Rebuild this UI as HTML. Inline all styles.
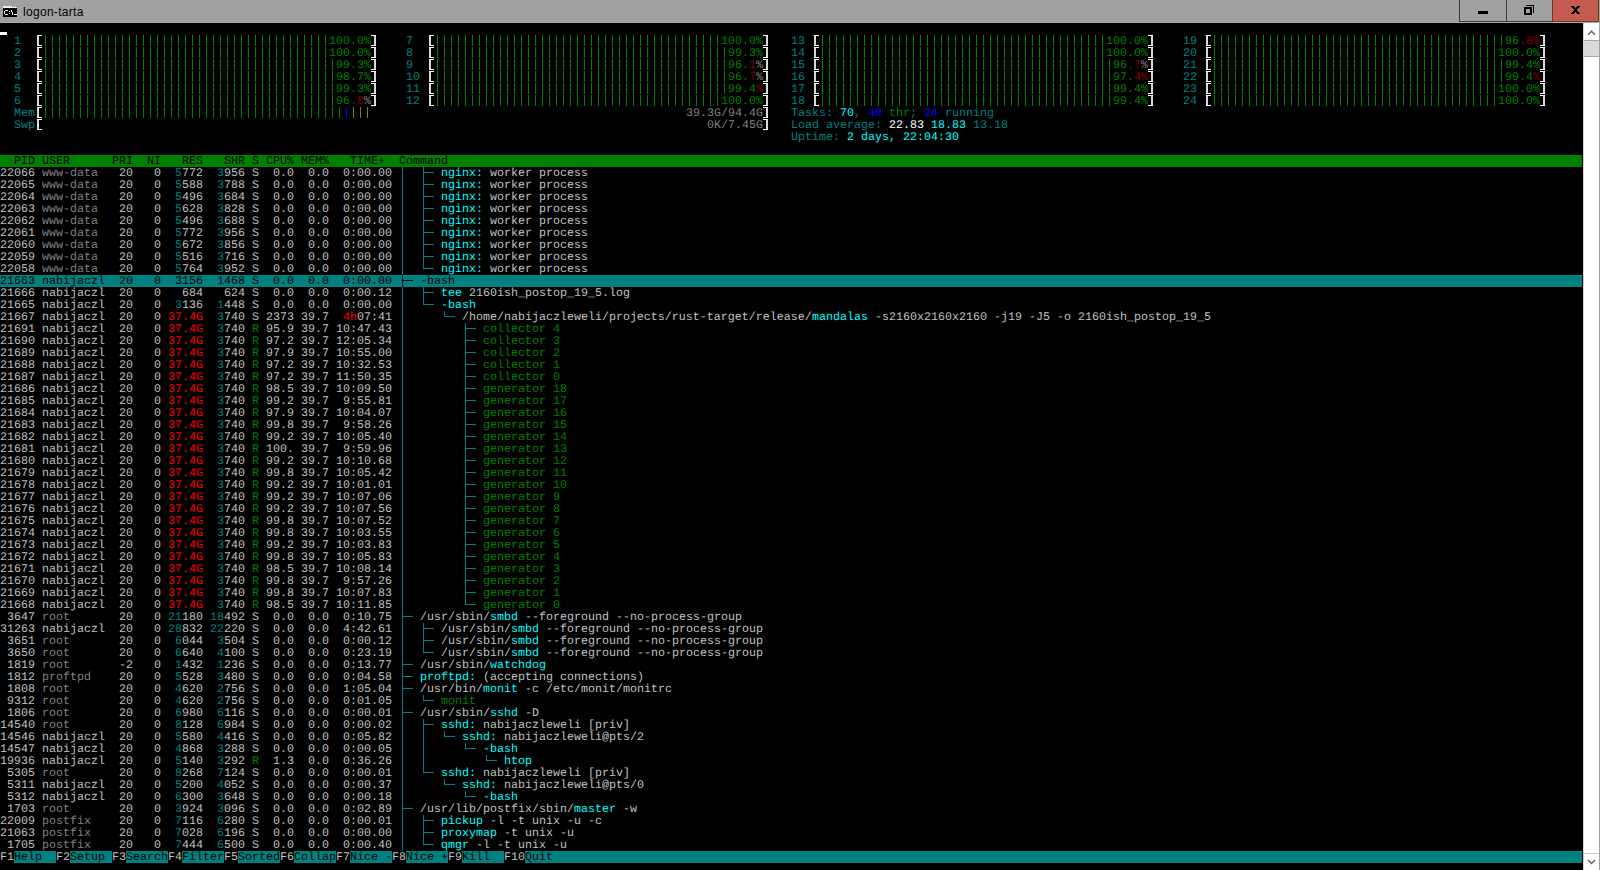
<!DOCTYPE html>
<html><head><meta charset="utf-8"><title>logon-tarta</title>
<style>
html,body{margin:0;padding:0;background:#000;width:1600px;height:870px;overflow:hidden;position:relative}
#tb{position:absolute;left:0;top:0;width:1600px;height:23px;background:#a0a0a0}
#tbl{position:absolute;left:0;top:22px;width:1600px;height:1px;background:#ababab}
#con{position:absolute;left:0;top:0;width:1583px;height:870px;overflow:hidden}
#con i{position:absolute;display:block}
#con b{position:absolute;font-weight:normal;white-space:pre;font-family:"Liberation Mono",monospace;font-size:11.667px;line-height:12px;height:12px;text-rendering:geometricPrecision}
#ttl{position:absolute;left:23px;top:4px;font-family:"Liberation Sans",sans-serif;font-size:12px;line-height:16px;color:#000;letter-spacing:0.3px}
.btn{position:absolute;top:0;height:22px;box-sizing:border-box;border:1px solid #3a3a3a;border-top:none}
#sb{position:absolute;left:1583px;top:23px;width:17px;height:847px;background:#fff}
</style></head><body>
<div id="tb"></div><div id="tbl"></div>
<svg style="position:absolute;left:3px;top:6px" width="15" height="12" shape-rendering="crispEdges">
 <rect x="0" y="0" width="14" height="11" fill="#9da3ad"/>
 <rect x="0" y="0" width="14" height="2" fill="#e6eaf2"/>
 <rect x="9" y="0" width="1" height="1" fill="#5a7ab0"/><rect x="11" y="0" width="1" height="1" fill="#5a7ab0"/><rect x="13" y="0" width="1" height="1" fill="#5a7ab0"/>
 <rect x="0" y="2" width="14" height="9" fill="#000"/>
 <rect x="2" y="4" width="3" height="1" fill="#fff"/><rect x="1" y="5" width="1" height="3" fill="#fff"/><rect x="2" y="8" width="3" height="1" fill="#fff"/>
 <rect x="6" y="5" width="1" height="1" fill="#fff"/><rect x="6" y="7" width="1" height="1" fill="#fff"/>
 <rect x="8" y="4" width="1" height="2" fill="#fff"/><rect x="9" y="6" width="1" height="3" fill="#fff"/>
 <rect x="11" y="8" width="3" height="1" fill="#fff"/>
</svg>
<div id="ttl">logon-tarta</div>
<div class="btn" style="left:1459px;width:48px;background:#a0a0a0"><div style="position:absolute;left:18px;top:11px;width:10px;height:3px;background:#000"></div></div>
<div class="btn" style="left:1507px;width:45px;background:#a0a0a0;border-left:none;border-right:none">
 <div style="position:absolute;left:17px;top:7px;width:8px;height:8px;border:2px solid #000;box-sizing:border-box"></div>
 <div style="position:absolute;left:19px;top:5px;width:8px;height:8px;border-top:1px solid #000;border-right:1px solid #000;box-sizing:border-box"></div>
</div>
<div class="btn" style="left:1552px;width:47px;background:#c45b4f;border-color:#6e3530">
 <svg style="position:absolute;left:18px;top:6px" width="9" height="8" shape-rendering="crispEdges" fill="#000"><rect x="0" y="0" width="3" height="1"/><rect x="6" y="0" width="3" height="1"/><rect x="1" y="1" width="3" height="1"/><rect x="5" y="1" width="3" height="1"/><rect x="2" y="2" width="5" height="1"/><rect x="3" y="3" width="3" height="1"/><rect x="3" y="4" width="3" height="1"/><rect x="2" y="5" width="5" height="1"/><rect x="1" y="6" width="3" height="1"/><rect x="5" y="6" width="3" height="1"/><rect x="0" y="7" width="3" height="1"/><rect x="6" y="7" width="3" height="1"/></svg>
</div>
<div id="con">
<i style="left:0px;top:32px;width:7px;height:3px;background:#ffffff"></i>
<i style="left:37px;top:35px;width:5px;height:1px;background:#ffffff"></i>
<i style="left:37px;top:45px;width:5px;height:1px;background:#ffffff"></i>
<i style="left:37px;top:36px;width:2px;height:9px;background:#d8d8d8"></i>
<i style="left:371px;top:35px;width:5px;height:1px;background:#ffffff"></i>
<i style="left:371px;top:45px;width:5px;height:1px;background:#ffffff"></i>
<i style="left:374px;top:36px;width:2px;height:9px;background:#d8d8d8"></i>
<i style="left:42px;top:35px;width:287px;height:11px;background:repeating-linear-gradient(90deg,transparent 0 3px,#008000 3px 4px,transparent 4px 7px)"></i>
<i style="left:37px;top:47px;width:5px;height:1px;background:#ffffff"></i>
<i style="left:37px;top:57px;width:5px;height:1px;background:#ffffff"></i>
<i style="left:37px;top:48px;width:2px;height:9px;background:#d8d8d8"></i>
<i style="left:371px;top:47px;width:5px;height:1px;background:#ffffff"></i>
<i style="left:371px;top:57px;width:5px;height:1px;background:#ffffff"></i>
<i style="left:374px;top:48px;width:2px;height:9px;background:#d8d8d8"></i>
<i style="left:42px;top:47px;width:287px;height:11px;background:repeating-linear-gradient(90deg,transparent 0 3px,#008000 3px 4px,transparent 4px 7px)"></i>
<i style="left:37px;top:59px;width:5px;height:1px;background:#ffffff"></i>
<i style="left:37px;top:69px;width:5px;height:1px;background:#ffffff"></i>
<i style="left:37px;top:60px;width:2px;height:9px;background:#d8d8d8"></i>
<i style="left:371px;top:59px;width:5px;height:1px;background:#ffffff"></i>
<i style="left:371px;top:69px;width:5px;height:1px;background:#ffffff"></i>
<i style="left:374px;top:60px;width:2px;height:9px;background:#d8d8d8"></i>
<i style="left:42px;top:59px;width:294px;height:11px;background:repeating-linear-gradient(90deg,transparent 0 3px,#008000 3px 4px,transparent 4px 7px)"></i>
<i style="left:37px;top:71px;width:5px;height:1px;background:#ffffff"></i>
<i style="left:37px;top:81px;width:5px;height:1px;background:#ffffff"></i>
<i style="left:37px;top:72px;width:2px;height:9px;background:#d8d8d8"></i>
<i style="left:371px;top:71px;width:5px;height:1px;background:#ffffff"></i>
<i style="left:371px;top:81px;width:5px;height:1px;background:#ffffff"></i>
<i style="left:374px;top:72px;width:2px;height:9px;background:#d8d8d8"></i>
<i style="left:42px;top:71px;width:294px;height:11px;background:repeating-linear-gradient(90deg,transparent 0 3px,#008000 3px 4px,transparent 4px 7px)"></i>
<i style="left:37px;top:83px;width:5px;height:1px;background:#ffffff"></i>
<i style="left:37px;top:93px;width:5px;height:1px;background:#ffffff"></i>
<i style="left:37px;top:84px;width:2px;height:9px;background:#d8d8d8"></i>
<i style="left:371px;top:83px;width:5px;height:1px;background:#ffffff"></i>
<i style="left:371px;top:93px;width:5px;height:1px;background:#ffffff"></i>
<i style="left:374px;top:84px;width:2px;height:9px;background:#d8d8d8"></i>
<i style="left:42px;top:83px;width:294px;height:11px;background:repeating-linear-gradient(90deg,transparent 0 3px,#008000 3px 4px,transparent 4px 7px)"></i>
<i style="left:37px;top:95px;width:5px;height:1px;background:#ffffff"></i>
<i style="left:37px;top:105px;width:5px;height:1px;background:#ffffff"></i>
<i style="left:37px;top:96px;width:2px;height:9px;background:#d8d8d8"></i>
<i style="left:371px;top:95px;width:5px;height:1px;background:#ffffff"></i>
<i style="left:371px;top:105px;width:5px;height:1px;background:#ffffff"></i>
<i style="left:374px;top:96px;width:2px;height:9px;background:#d8d8d8"></i>
<i style="left:42px;top:95px;width:294px;height:11px;background:repeating-linear-gradient(90deg,transparent 0 3px,#008000 3px 4px,transparent 4px 7px)"></i>
<i style="left:429px;top:35px;width:5px;height:1px;background:#ffffff"></i>
<i style="left:429px;top:45px;width:5px;height:1px;background:#ffffff"></i>
<i style="left:429px;top:36px;width:2px;height:9px;background:#d8d8d8"></i>
<i style="left:763px;top:35px;width:5px;height:1px;background:#ffffff"></i>
<i style="left:763px;top:45px;width:5px;height:1px;background:#ffffff"></i>
<i style="left:766px;top:36px;width:2px;height:9px;background:#d8d8d8"></i>
<i style="left:434px;top:35px;width:287px;height:11px;background:repeating-linear-gradient(90deg,transparent 0 3px,#008000 3px 4px,transparent 4px 7px)"></i>
<i style="left:429px;top:47px;width:5px;height:1px;background:#ffffff"></i>
<i style="left:429px;top:57px;width:5px;height:1px;background:#ffffff"></i>
<i style="left:429px;top:48px;width:2px;height:9px;background:#d8d8d8"></i>
<i style="left:763px;top:47px;width:5px;height:1px;background:#ffffff"></i>
<i style="left:763px;top:57px;width:5px;height:1px;background:#ffffff"></i>
<i style="left:766px;top:48px;width:2px;height:9px;background:#d8d8d8"></i>
<i style="left:434px;top:47px;width:294px;height:11px;background:repeating-linear-gradient(90deg,transparent 0 3px,#008000 3px 4px,transparent 4px 7px)"></i>
<i style="left:429px;top:59px;width:5px;height:1px;background:#ffffff"></i>
<i style="left:429px;top:69px;width:5px;height:1px;background:#ffffff"></i>
<i style="left:429px;top:60px;width:2px;height:9px;background:#d8d8d8"></i>
<i style="left:763px;top:59px;width:5px;height:1px;background:#ffffff"></i>
<i style="left:763px;top:69px;width:5px;height:1px;background:#ffffff"></i>
<i style="left:766px;top:60px;width:2px;height:9px;background:#d8d8d8"></i>
<i style="left:434px;top:59px;width:294px;height:11px;background:repeating-linear-gradient(90deg,transparent 0 3px,#008000 3px 4px,transparent 4px 7px)"></i>
<i style="left:429px;top:71px;width:5px;height:1px;background:#ffffff"></i>
<i style="left:429px;top:81px;width:5px;height:1px;background:#ffffff"></i>
<i style="left:429px;top:72px;width:2px;height:9px;background:#d8d8d8"></i>
<i style="left:763px;top:71px;width:5px;height:1px;background:#ffffff"></i>
<i style="left:763px;top:81px;width:5px;height:1px;background:#ffffff"></i>
<i style="left:766px;top:72px;width:2px;height:9px;background:#d8d8d8"></i>
<i style="left:434px;top:71px;width:294px;height:11px;background:repeating-linear-gradient(90deg,transparent 0 3px,#008000 3px 4px,transparent 4px 7px)"></i>
<i style="left:429px;top:83px;width:5px;height:1px;background:#ffffff"></i>
<i style="left:429px;top:93px;width:5px;height:1px;background:#ffffff"></i>
<i style="left:429px;top:84px;width:2px;height:9px;background:#d8d8d8"></i>
<i style="left:763px;top:83px;width:5px;height:1px;background:#ffffff"></i>
<i style="left:763px;top:93px;width:5px;height:1px;background:#ffffff"></i>
<i style="left:766px;top:84px;width:2px;height:9px;background:#d8d8d8"></i>
<i style="left:434px;top:83px;width:294px;height:11px;background:repeating-linear-gradient(90deg,transparent 0 3px,#008000 3px 4px,transparent 4px 7px)"></i>
<i style="left:429px;top:95px;width:5px;height:1px;background:#ffffff"></i>
<i style="left:429px;top:105px;width:5px;height:1px;background:#ffffff"></i>
<i style="left:429px;top:96px;width:2px;height:9px;background:#d8d8d8"></i>
<i style="left:763px;top:95px;width:5px;height:1px;background:#ffffff"></i>
<i style="left:763px;top:105px;width:5px;height:1px;background:#ffffff"></i>
<i style="left:766px;top:96px;width:2px;height:9px;background:#d8d8d8"></i>
<i style="left:434px;top:95px;width:287px;height:11px;background:repeating-linear-gradient(90deg,transparent 0 3px,#008000 3px 4px,transparent 4px 7px)"></i>
<i style="left:814px;top:35px;width:5px;height:1px;background:#ffffff"></i>
<i style="left:814px;top:45px;width:5px;height:1px;background:#ffffff"></i>
<i style="left:814px;top:36px;width:2px;height:9px;background:#d8d8d8"></i>
<i style="left:1148px;top:35px;width:5px;height:1px;background:#ffffff"></i>
<i style="left:1148px;top:45px;width:5px;height:1px;background:#ffffff"></i>
<i style="left:1151px;top:36px;width:2px;height:9px;background:#d8d8d8"></i>
<i style="left:819px;top:35px;width:287px;height:11px;background:repeating-linear-gradient(90deg,transparent 0 3px,#008000 3px 4px,transparent 4px 7px)"></i>
<i style="left:814px;top:47px;width:5px;height:1px;background:#ffffff"></i>
<i style="left:814px;top:57px;width:5px;height:1px;background:#ffffff"></i>
<i style="left:814px;top:48px;width:2px;height:9px;background:#d8d8d8"></i>
<i style="left:1148px;top:47px;width:5px;height:1px;background:#ffffff"></i>
<i style="left:1148px;top:57px;width:5px;height:1px;background:#ffffff"></i>
<i style="left:1151px;top:48px;width:2px;height:9px;background:#d8d8d8"></i>
<i style="left:819px;top:47px;width:287px;height:11px;background:repeating-linear-gradient(90deg,transparent 0 3px,#008000 3px 4px,transparent 4px 7px)"></i>
<i style="left:814px;top:59px;width:5px;height:1px;background:#ffffff"></i>
<i style="left:814px;top:69px;width:5px;height:1px;background:#ffffff"></i>
<i style="left:814px;top:60px;width:2px;height:9px;background:#d8d8d8"></i>
<i style="left:1148px;top:59px;width:5px;height:1px;background:#ffffff"></i>
<i style="left:1148px;top:69px;width:5px;height:1px;background:#ffffff"></i>
<i style="left:1151px;top:60px;width:2px;height:9px;background:#d8d8d8"></i>
<i style="left:819px;top:59px;width:294px;height:11px;background:repeating-linear-gradient(90deg,transparent 0 3px,#008000 3px 4px,transparent 4px 7px)"></i>
<i style="left:814px;top:71px;width:5px;height:1px;background:#ffffff"></i>
<i style="left:814px;top:81px;width:5px;height:1px;background:#ffffff"></i>
<i style="left:814px;top:72px;width:2px;height:9px;background:#d8d8d8"></i>
<i style="left:1148px;top:71px;width:5px;height:1px;background:#ffffff"></i>
<i style="left:1148px;top:81px;width:5px;height:1px;background:#ffffff"></i>
<i style="left:1151px;top:72px;width:2px;height:9px;background:#d8d8d8"></i>
<i style="left:819px;top:71px;width:294px;height:11px;background:repeating-linear-gradient(90deg,transparent 0 3px,#008000 3px 4px,transparent 4px 7px)"></i>
<i style="left:814px;top:83px;width:5px;height:1px;background:#ffffff"></i>
<i style="left:814px;top:93px;width:5px;height:1px;background:#ffffff"></i>
<i style="left:814px;top:84px;width:2px;height:9px;background:#d8d8d8"></i>
<i style="left:1148px;top:83px;width:5px;height:1px;background:#ffffff"></i>
<i style="left:1148px;top:93px;width:5px;height:1px;background:#ffffff"></i>
<i style="left:1151px;top:84px;width:2px;height:9px;background:#d8d8d8"></i>
<i style="left:819px;top:83px;width:294px;height:11px;background:repeating-linear-gradient(90deg,transparent 0 3px,#008000 3px 4px,transparent 4px 7px)"></i>
<i style="left:814px;top:95px;width:5px;height:1px;background:#ffffff"></i>
<i style="left:814px;top:105px;width:5px;height:1px;background:#ffffff"></i>
<i style="left:814px;top:96px;width:2px;height:9px;background:#d8d8d8"></i>
<i style="left:1148px;top:95px;width:5px;height:1px;background:#ffffff"></i>
<i style="left:1148px;top:105px;width:5px;height:1px;background:#ffffff"></i>
<i style="left:1151px;top:96px;width:2px;height:9px;background:#d8d8d8"></i>
<i style="left:819px;top:95px;width:294px;height:11px;background:repeating-linear-gradient(90deg,transparent 0 3px,#008000 3px 4px,transparent 4px 7px)"></i>
<i style="left:1206px;top:35px;width:5px;height:1px;background:#ffffff"></i>
<i style="left:1206px;top:45px;width:5px;height:1px;background:#ffffff"></i>
<i style="left:1206px;top:36px;width:2px;height:9px;background:#d8d8d8"></i>
<i style="left:1540px;top:35px;width:5px;height:1px;background:#ffffff"></i>
<i style="left:1540px;top:45px;width:5px;height:1px;background:#ffffff"></i>
<i style="left:1543px;top:36px;width:2px;height:9px;background:#d8d8d8"></i>
<i style="left:1211px;top:35px;width:294px;height:11px;background:repeating-linear-gradient(90deg,transparent 0 3px,#008000 3px 4px,transparent 4px 7px)"></i>
<i style="left:1206px;top:47px;width:5px;height:1px;background:#ffffff"></i>
<i style="left:1206px;top:57px;width:5px;height:1px;background:#ffffff"></i>
<i style="left:1206px;top:48px;width:2px;height:9px;background:#d8d8d8"></i>
<i style="left:1540px;top:47px;width:5px;height:1px;background:#ffffff"></i>
<i style="left:1540px;top:57px;width:5px;height:1px;background:#ffffff"></i>
<i style="left:1543px;top:48px;width:2px;height:9px;background:#d8d8d8"></i>
<i style="left:1211px;top:47px;width:287px;height:11px;background:repeating-linear-gradient(90deg,transparent 0 3px,#008000 3px 4px,transparent 4px 7px)"></i>
<i style="left:1206px;top:59px;width:5px;height:1px;background:#ffffff"></i>
<i style="left:1206px;top:69px;width:5px;height:1px;background:#ffffff"></i>
<i style="left:1206px;top:60px;width:2px;height:9px;background:#d8d8d8"></i>
<i style="left:1540px;top:59px;width:5px;height:1px;background:#ffffff"></i>
<i style="left:1540px;top:69px;width:5px;height:1px;background:#ffffff"></i>
<i style="left:1543px;top:60px;width:2px;height:9px;background:#d8d8d8"></i>
<i style="left:1211px;top:59px;width:294px;height:11px;background:repeating-linear-gradient(90deg,transparent 0 3px,#008000 3px 4px,transparent 4px 7px)"></i>
<i style="left:1206px;top:71px;width:5px;height:1px;background:#ffffff"></i>
<i style="left:1206px;top:81px;width:5px;height:1px;background:#ffffff"></i>
<i style="left:1206px;top:72px;width:2px;height:9px;background:#d8d8d8"></i>
<i style="left:1540px;top:71px;width:5px;height:1px;background:#ffffff"></i>
<i style="left:1540px;top:81px;width:5px;height:1px;background:#ffffff"></i>
<i style="left:1543px;top:72px;width:2px;height:9px;background:#d8d8d8"></i>
<i style="left:1211px;top:71px;width:294px;height:11px;background:repeating-linear-gradient(90deg,transparent 0 3px,#008000 3px 4px,transparent 4px 7px)"></i>
<i style="left:1206px;top:83px;width:5px;height:1px;background:#ffffff"></i>
<i style="left:1206px;top:93px;width:5px;height:1px;background:#ffffff"></i>
<i style="left:1206px;top:84px;width:2px;height:9px;background:#d8d8d8"></i>
<i style="left:1540px;top:83px;width:5px;height:1px;background:#ffffff"></i>
<i style="left:1540px;top:93px;width:5px;height:1px;background:#ffffff"></i>
<i style="left:1543px;top:84px;width:2px;height:9px;background:#d8d8d8"></i>
<i style="left:1211px;top:83px;width:287px;height:11px;background:repeating-linear-gradient(90deg,transparent 0 3px,#008000 3px 4px,transparent 4px 7px)"></i>
<i style="left:1206px;top:95px;width:5px;height:1px;background:#ffffff"></i>
<i style="left:1206px;top:105px;width:5px;height:1px;background:#ffffff"></i>
<i style="left:1206px;top:96px;width:2px;height:9px;background:#d8d8d8"></i>
<i style="left:1540px;top:95px;width:5px;height:1px;background:#ffffff"></i>
<i style="left:1540px;top:105px;width:5px;height:1px;background:#ffffff"></i>
<i style="left:1543px;top:96px;width:2px;height:9px;background:#d8d8d8"></i>
<i style="left:1211px;top:95px;width:287px;height:11px;background:repeating-linear-gradient(90deg,transparent 0 3px,#008000 3px 4px,transparent 4px 7px)"></i>
<i style="left:37px;top:107px;width:5px;height:1px;background:#ffffff"></i>
<i style="left:37px;top:117px;width:5px;height:1px;background:#ffffff"></i>
<i style="left:37px;top:108px;width:2px;height:9px;background:#d8d8d8"></i>
<i style="left:42px;top:107px;width:301px;height:11px;background:repeating-linear-gradient(90deg,transparent 0 3px,#008000 3px 4px,transparent 4px 7px)"></i>
<i style="left:343px;top:107px;width:7px;height:11px;background:repeating-linear-gradient(90deg,transparent 0 3px,#0000ff 3px 4px,transparent 4px 7px)"></i>
<i style="left:350px;top:107px;width:21px;height:11px;background:repeating-linear-gradient(90deg,transparent 0 3px,#808000 3px 4px,transparent 4px 7px)"></i>
<i style="left:763px;top:107px;width:5px;height:1px;background:#ffffff"></i>
<i style="left:763px;top:117px;width:5px;height:1px;background:#ffffff"></i>
<i style="left:766px;top:108px;width:2px;height:9px;background:#d8d8d8"></i>
<i style="left:37px;top:119px;width:5px;height:1px;background:#ffffff"></i>
<i style="left:37px;top:129px;width:5px;height:1px;background:#ffffff"></i>
<i style="left:37px;top:120px;width:2px;height:9px;background:#d8d8d8"></i>
<i style="left:763px;top:119px;width:5px;height:1px;background:#ffffff"></i>
<i style="left:763px;top:129px;width:5px;height:1px;background:#ffffff"></i>
<i style="left:766px;top:120px;width:2px;height:9px;background:#d8d8d8"></i>
<i style="left:0px;top:155px;width:1582px;height:12px;background:#008000"></i>
<i style="left:402px;top:167px;width:1px;height:12px;background:#008080"></i>
<i style="left:423px;top:167px;width:1px;height:12px;background:#008080"></i>
<i style="left:423px;top:172px;width:4px;height:1px;background:#008080"></i>
<i style="left:427px;top:172px;width:7px;height:1px;background:#008080"></i>
<i style="left:402px;top:179px;width:1px;height:12px;background:#008080"></i>
<i style="left:423px;top:179px;width:1px;height:12px;background:#008080"></i>
<i style="left:423px;top:184px;width:4px;height:1px;background:#008080"></i>
<i style="left:427px;top:184px;width:7px;height:1px;background:#008080"></i>
<i style="left:402px;top:191px;width:1px;height:12px;background:#008080"></i>
<i style="left:423px;top:191px;width:1px;height:12px;background:#008080"></i>
<i style="left:423px;top:196px;width:4px;height:1px;background:#008080"></i>
<i style="left:427px;top:196px;width:7px;height:1px;background:#008080"></i>
<i style="left:402px;top:203px;width:1px;height:12px;background:#008080"></i>
<i style="left:423px;top:203px;width:1px;height:12px;background:#008080"></i>
<i style="left:423px;top:208px;width:4px;height:1px;background:#008080"></i>
<i style="left:427px;top:208px;width:7px;height:1px;background:#008080"></i>
<i style="left:402px;top:215px;width:1px;height:12px;background:#008080"></i>
<i style="left:423px;top:215px;width:1px;height:12px;background:#008080"></i>
<i style="left:423px;top:220px;width:4px;height:1px;background:#008080"></i>
<i style="left:427px;top:220px;width:7px;height:1px;background:#008080"></i>
<i style="left:402px;top:227px;width:1px;height:12px;background:#008080"></i>
<i style="left:423px;top:227px;width:1px;height:12px;background:#008080"></i>
<i style="left:423px;top:232px;width:4px;height:1px;background:#008080"></i>
<i style="left:427px;top:232px;width:7px;height:1px;background:#008080"></i>
<i style="left:402px;top:239px;width:1px;height:12px;background:#008080"></i>
<i style="left:423px;top:239px;width:1px;height:12px;background:#008080"></i>
<i style="left:423px;top:244px;width:4px;height:1px;background:#008080"></i>
<i style="left:427px;top:244px;width:7px;height:1px;background:#008080"></i>
<i style="left:402px;top:251px;width:1px;height:12px;background:#008080"></i>
<i style="left:423px;top:251px;width:1px;height:12px;background:#008080"></i>
<i style="left:423px;top:256px;width:4px;height:1px;background:#008080"></i>
<i style="left:427px;top:256px;width:7px;height:1px;background:#008080"></i>
<i style="left:402px;top:263px;width:1px;height:12px;background:#008080"></i>
<i style="left:423px;top:263px;width:1px;height:6px;background:#008080"></i>
<i style="left:423px;top:268px;width:4px;height:1px;background:#008080"></i>
<i style="left:427px;top:268px;width:7px;height:1px;background:#008080"></i>
<i style="left:0px;top:275px;width:1582px;height:12px;background:#008080"></i>
<i style="left:402px;top:275px;width:1px;height:12px;background:#000000"></i>
<i style="left:402px;top:280px;width:4px;height:1px;background:#000000"></i>
<i style="left:406px;top:280px;width:7px;height:1px;background:#000000"></i>
<i style="left:402px;top:287px;width:1px;height:12px;background:#008080"></i>
<i style="left:423px;top:287px;width:1px;height:12px;background:#008080"></i>
<i style="left:423px;top:292px;width:4px;height:1px;background:#008080"></i>
<i style="left:427px;top:292px;width:7px;height:1px;background:#008080"></i>
<i style="left:402px;top:299px;width:1px;height:12px;background:#008080"></i>
<i style="left:423px;top:299px;width:1px;height:6px;background:#008080"></i>
<i style="left:423px;top:304px;width:4px;height:1px;background:#008080"></i>
<i style="left:427px;top:304px;width:7px;height:1px;background:#008080"></i>
<i style="left:402px;top:311px;width:1px;height:12px;background:#008080"></i>
<i style="left:444px;top:311px;width:1px;height:6px;background:#008080"></i>
<i style="left:444px;top:316px;width:4px;height:1px;background:#008080"></i>
<i style="left:448px;top:316px;width:7px;height:1px;background:#008080"></i>
<i style="left:402px;top:323px;width:1px;height:12px;background:#008080"></i>
<i style="left:465px;top:323px;width:1px;height:12px;background:#008080"></i>
<i style="left:465px;top:328px;width:4px;height:1px;background:#008080"></i>
<i style="left:469px;top:328px;width:7px;height:1px;background:#008080"></i>
<i style="left:402px;top:335px;width:1px;height:12px;background:#008080"></i>
<i style="left:465px;top:335px;width:1px;height:12px;background:#008080"></i>
<i style="left:465px;top:340px;width:4px;height:1px;background:#008080"></i>
<i style="left:469px;top:340px;width:7px;height:1px;background:#008080"></i>
<i style="left:402px;top:347px;width:1px;height:12px;background:#008080"></i>
<i style="left:465px;top:347px;width:1px;height:12px;background:#008080"></i>
<i style="left:465px;top:352px;width:4px;height:1px;background:#008080"></i>
<i style="left:469px;top:352px;width:7px;height:1px;background:#008080"></i>
<i style="left:402px;top:359px;width:1px;height:12px;background:#008080"></i>
<i style="left:465px;top:359px;width:1px;height:12px;background:#008080"></i>
<i style="left:465px;top:364px;width:4px;height:1px;background:#008080"></i>
<i style="left:469px;top:364px;width:7px;height:1px;background:#008080"></i>
<i style="left:402px;top:371px;width:1px;height:12px;background:#008080"></i>
<i style="left:465px;top:371px;width:1px;height:12px;background:#008080"></i>
<i style="left:465px;top:376px;width:4px;height:1px;background:#008080"></i>
<i style="left:469px;top:376px;width:7px;height:1px;background:#008080"></i>
<i style="left:402px;top:383px;width:1px;height:12px;background:#008080"></i>
<i style="left:465px;top:383px;width:1px;height:12px;background:#008080"></i>
<i style="left:465px;top:388px;width:4px;height:1px;background:#008080"></i>
<i style="left:469px;top:388px;width:7px;height:1px;background:#008080"></i>
<i style="left:402px;top:395px;width:1px;height:12px;background:#008080"></i>
<i style="left:465px;top:395px;width:1px;height:12px;background:#008080"></i>
<i style="left:465px;top:400px;width:4px;height:1px;background:#008080"></i>
<i style="left:469px;top:400px;width:7px;height:1px;background:#008080"></i>
<i style="left:402px;top:407px;width:1px;height:12px;background:#008080"></i>
<i style="left:465px;top:407px;width:1px;height:12px;background:#008080"></i>
<i style="left:465px;top:412px;width:4px;height:1px;background:#008080"></i>
<i style="left:469px;top:412px;width:7px;height:1px;background:#008080"></i>
<i style="left:402px;top:419px;width:1px;height:12px;background:#008080"></i>
<i style="left:465px;top:419px;width:1px;height:12px;background:#008080"></i>
<i style="left:465px;top:424px;width:4px;height:1px;background:#008080"></i>
<i style="left:469px;top:424px;width:7px;height:1px;background:#008080"></i>
<i style="left:402px;top:431px;width:1px;height:12px;background:#008080"></i>
<i style="left:465px;top:431px;width:1px;height:12px;background:#008080"></i>
<i style="left:465px;top:436px;width:4px;height:1px;background:#008080"></i>
<i style="left:469px;top:436px;width:7px;height:1px;background:#008080"></i>
<i style="left:402px;top:443px;width:1px;height:12px;background:#008080"></i>
<i style="left:465px;top:443px;width:1px;height:12px;background:#008080"></i>
<i style="left:465px;top:448px;width:4px;height:1px;background:#008080"></i>
<i style="left:469px;top:448px;width:7px;height:1px;background:#008080"></i>
<i style="left:402px;top:455px;width:1px;height:12px;background:#008080"></i>
<i style="left:465px;top:455px;width:1px;height:12px;background:#008080"></i>
<i style="left:465px;top:460px;width:4px;height:1px;background:#008080"></i>
<i style="left:469px;top:460px;width:7px;height:1px;background:#008080"></i>
<i style="left:402px;top:467px;width:1px;height:12px;background:#008080"></i>
<i style="left:465px;top:467px;width:1px;height:12px;background:#008080"></i>
<i style="left:465px;top:472px;width:4px;height:1px;background:#008080"></i>
<i style="left:469px;top:472px;width:7px;height:1px;background:#008080"></i>
<i style="left:402px;top:479px;width:1px;height:12px;background:#008080"></i>
<i style="left:465px;top:479px;width:1px;height:12px;background:#008080"></i>
<i style="left:465px;top:484px;width:4px;height:1px;background:#008080"></i>
<i style="left:469px;top:484px;width:7px;height:1px;background:#008080"></i>
<i style="left:402px;top:491px;width:1px;height:12px;background:#008080"></i>
<i style="left:465px;top:491px;width:1px;height:12px;background:#008080"></i>
<i style="left:465px;top:496px;width:4px;height:1px;background:#008080"></i>
<i style="left:469px;top:496px;width:7px;height:1px;background:#008080"></i>
<i style="left:402px;top:503px;width:1px;height:12px;background:#008080"></i>
<i style="left:465px;top:503px;width:1px;height:12px;background:#008080"></i>
<i style="left:465px;top:508px;width:4px;height:1px;background:#008080"></i>
<i style="left:469px;top:508px;width:7px;height:1px;background:#008080"></i>
<i style="left:402px;top:515px;width:1px;height:12px;background:#008080"></i>
<i style="left:465px;top:515px;width:1px;height:12px;background:#008080"></i>
<i style="left:465px;top:520px;width:4px;height:1px;background:#008080"></i>
<i style="left:469px;top:520px;width:7px;height:1px;background:#008080"></i>
<i style="left:402px;top:527px;width:1px;height:12px;background:#008080"></i>
<i style="left:465px;top:527px;width:1px;height:12px;background:#008080"></i>
<i style="left:465px;top:532px;width:4px;height:1px;background:#008080"></i>
<i style="left:469px;top:532px;width:7px;height:1px;background:#008080"></i>
<i style="left:402px;top:539px;width:1px;height:12px;background:#008080"></i>
<i style="left:465px;top:539px;width:1px;height:12px;background:#008080"></i>
<i style="left:465px;top:544px;width:4px;height:1px;background:#008080"></i>
<i style="left:469px;top:544px;width:7px;height:1px;background:#008080"></i>
<i style="left:402px;top:551px;width:1px;height:12px;background:#008080"></i>
<i style="left:465px;top:551px;width:1px;height:12px;background:#008080"></i>
<i style="left:465px;top:556px;width:4px;height:1px;background:#008080"></i>
<i style="left:469px;top:556px;width:7px;height:1px;background:#008080"></i>
<i style="left:402px;top:563px;width:1px;height:12px;background:#008080"></i>
<i style="left:465px;top:563px;width:1px;height:12px;background:#008080"></i>
<i style="left:465px;top:568px;width:4px;height:1px;background:#008080"></i>
<i style="left:469px;top:568px;width:7px;height:1px;background:#008080"></i>
<i style="left:402px;top:575px;width:1px;height:12px;background:#008080"></i>
<i style="left:465px;top:575px;width:1px;height:12px;background:#008080"></i>
<i style="left:465px;top:580px;width:4px;height:1px;background:#008080"></i>
<i style="left:469px;top:580px;width:7px;height:1px;background:#008080"></i>
<i style="left:402px;top:587px;width:1px;height:12px;background:#008080"></i>
<i style="left:465px;top:587px;width:1px;height:12px;background:#008080"></i>
<i style="left:465px;top:592px;width:4px;height:1px;background:#008080"></i>
<i style="left:469px;top:592px;width:7px;height:1px;background:#008080"></i>
<i style="left:402px;top:599px;width:1px;height:12px;background:#008080"></i>
<i style="left:465px;top:599px;width:1px;height:6px;background:#008080"></i>
<i style="left:465px;top:604px;width:4px;height:1px;background:#008080"></i>
<i style="left:469px;top:604px;width:7px;height:1px;background:#008080"></i>
<i style="left:402px;top:611px;width:1px;height:12px;background:#008080"></i>
<i style="left:402px;top:616px;width:4px;height:1px;background:#008080"></i>
<i style="left:406px;top:616px;width:7px;height:1px;background:#008080"></i>
<i style="left:402px;top:623px;width:1px;height:12px;background:#008080"></i>
<i style="left:423px;top:623px;width:1px;height:12px;background:#008080"></i>
<i style="left:423px;top:628px;width:4px;height:1px;background:#008080"></i>
<i style="left:427px;top:628px;width:7px;height:1px;background:#008080"></i>
<i style="left:402px;top:635px;width:1px;height:12px;background:#008080"></i>
<i style="left:423px;top:635px;width:1px;height:12px;background:#008080"></i>
<i style="left:423px;top:640px;width:4px;height:1px;background:#008080"></i>
<i style="left:427px;top:640px;width:7px;height:1px;background:#008080"></i>
<i style="left:402px;top:647px;width:1px;height:12px;background:#008080"></i>
<i style="left:423px;top:647px;width:1px;height:6px;background:#008080"></i>
<i style="left:423px;top:652px;width:4px;height:1px;background:#008080"></i>
<i style="left:427px;top:652px;width:7px;height:1px;background:#008080"></i>
<i style="left:402px;top:659px;width:1px;height:12px;background:#008080"></i>
<i style="left:402px;top:664px;width:4px;height:1px;background:#008080"></i>
<i style="left:406px;top:664px;width:7px;height:1px;background:#008080"></i>
<i style="left:402px;top:671px;width:1px;height:12px;background:#008080"></i>
<i style="left:402px;top:676px;width:4px;height:1px;background:#008080"></i>
<i style="left:406px;top:676px;width:7px;height:1px;background:#008080"></i>
<i style="left:402px;top:683px;width:1px;height:12px;background:#008080"></i>
<i style="left:402px;top:688px;width:4px;height:1px;background:#008080"></i>
<i style="left:406px;top:688px;width:7px;height:1px;background:#008080"></i>
<i style="left:402px;top:695px;width:1px;height:12px;background:#008080"></i>
<i style="left:423px;top:695px;width:1px;height:6px;background:#008080"></i>
<i style="left:423px;top:700px;width:4px;height:1px;background:#008080"></i>
<i style="left:427px;top:700px;width:7px;height:1px;background:#008080"></i>
<i style="left:402px;top:707px;width:1px;height:12px;background:#008080"></i>
<i style="left:402px;top:712px;width:4px;height:1px;background:#008080"></i>
<i style="left:406px;top:712px;width:7px;height:1px;background:#008080"></i>
<i style="left:402px;top:719px;width:1px;height:12px;background:#008080"></i>
<i style="left:423px;top:719px;width:1px;height:12px;background:#008080"></i>
<i style="left:423px;top:724px;width:4px;height:1px;background:#008080"></i>
<i style="left:427px;top:724px;width:7px;height:1px;background:#008080"></i>
<i style="left:402px;top:731px;width:1px;height:12px;background:#008080"></i>
<i style="left:423px;top:731px;width:1px;height:12px;background:#008080"></i>
<i style="left:444px;top:731px;width:1px;height:6px;background:#008080"></i>
<i style="left:444px;top:736px;width:4px;height:1px;background:#008080"></i>
<i style="left:448px;top:736px;width:7px;height:1px;background:#008080"></i>
<i style="left:402px;top:743px;width:1px;height:12px;background:#008080"></i>
<i style="left:423px;top:743px;width:1px;height:12px;background:#008080"></i>
<i style="left:465px;top:743px;width:1px;height:6px;background:#008080"></i>
<i style="left:465px;top:748px;width:4px;height:1px;background:#008080"></i>
<i style="left:469px;top:748px;width:7px;height:1px;background:#008080"></i>
<i style="left:402px;top:755px;width:1px;height:12px;background:#008080"></i>
<i style="left:423px;top:755px;width:1px;height:12px;background:#008080"></i>
<i style="left:486px;top:755px;width:1px;height:6px;background:#008080"></i>
<i style="left:486px;top:760px;width:4px;height:1px;background:#008080"></i>
<i style="left:490px;top:760px;width:7px;height:1px;background:#008080"></i>
<i style="left:402px;top:767px;width:1px;height:12px;background:#008080"></i>
<i style="left:423px;top:767px;width:1px;height:6px;background:#008080"></i>
<i style="left:423px;top:772px;width:4px;height:1px;background:#008080"></i>
<i style="left:427px;top:772px;width:7px;height:1px;background:#008080"></i>
<i style="left:402px;top:779px;width:1px;height:12px;background:#008080"></i>
<i style="left:444px;top:779px;width:1px;height:6px;background:#008080"></i>
<i style="left:444px;top:784px;width:4px;height:1px;background:#008080"></i>
<i style="left:448px;top:784px;width:7px;height:1px;background:#008080"></i>
<i style="left:402px;top:791px;width:1px;height:12px;background:#008080"></i>
<i style="left:465px;top:791px;width:1px;height:6px;background:#008080"></i>
<i style="left:465px;top:796px;width:4px;height:1px;background:#008080"></i>
<i style="left:469px;top:796px;width:7px;height:1px;background:#008080"></i>
<i style="left:402px;top:803px;width:1px;height:12px;background:#008080"></i>
<i style="left:402px;top:808px;width:4px;height:1px;background:#008080"></i>
<i style="left:406px;top:808px;width:7px;height:1px;background:#008080"></i>
<i style="left:402px;top:815px;width:1px;height:12px;background:#008080"></i>
<i style="left:423px;top:815px;width:1px;height:12px;background:#008080"></i>
<i style="left:423px;top:820px;width:4px;height:1px;background:#008080"></i>
<i style="left:427px;top:820px;width:7px;height:1px;background:#008080"></i>
<i style="left:402px;top:827px;width:1px;height:12px;background:#008080"></i>
<i style="left:423px;top:827px;width:1px;height:12px;background:#008080"></i>
<i style="left:423px;top:832px;width:4px;height:1px;background:#008080"></i>
<i style="left:427px;top:832px;width:7px;height:1px;background:#008080"></i>
<i style="left:402px;top:839px;width:1px;height:12px;background:#008080"></i>
<i style="left:423px;top:839px;width:1px;height:6px;background:#008080"></i>
<i style="left:423px;top:844px;width:4px;height:1px;background:#008080"></i>
<i style="left:427px;top:844px;width:7px;height:1px;background:#008080"></i>
<i style="left:14px;top:851px;width:42px;height:12px;background:#008080"></i>
<i style="left:70px;top:851px;width:42px;height:12px;background:#008080"></i>
<i style="left:126px;top:851px;width:42px;height:12px;background:#008080"></i>
<i style="left:182px;top:851px;width:42px;height:12px;background:#008080"></i>
<i style="left:238px;top:851px;width:42px;height:12px;background:#008080"></i>
<i style="left:294px;top:851px;width:42px;height:12px;background:#008080"></i>
<i style="left:350px;top:851px;width:42px;height:12px;background:#008080"></i>
<i style="left:406px;top:851px;width:42px;height:12px;background:#008080"></i>
<i style="left:462px;top:851px;width:42px;height:12px;background:#008080"></i>
<i style="left:525px;top:851px;width:1057px;height:12px;background:#008080"></i>
<b style="left:14px;top:35px;color:#008080">1</b>
<b style="left:329px;top:35px;color:#008000">100.0%</b>
<b style="left:14px;top:47px;color:#008080">2</b>
<b style="left:329px;top:47px;color:#008000">100.0%</b>
<b style="left:14px;top:59px;color:#008080">3</b>
<b style="left:336px;top:59px;color:#008000">99.3%</b>
<b style="left:14px;top:71px;color:#008080">4</b>
<b style="left:336px;top:71px;color:#008000">98.7%</b>
<b style="left:14px;top:83px;color:#008080">5</b>
<b style="left:336px;top:83px;color:#008000">99.3%</b>
<b style="left:14px;top:95px;color:#008080">6</b>
<b style="left:336px;top:95px;color:#008000">96</b>
<b style="left:350px;top:95px;color:#800000">.8</b>
<b style="left:364px;top:95px;color:#808080">%</b>
<b style="left:406px;top:35px;color:#008080">7</b>
<b style="left:721px;top:35px;color:#008000">100.0%</b>
<b style="left:406px;top:47px;color:#008080">8</b>
<b style="left:728px;top:47px;color:#008000">99.3%</b>
<b style="left:406px;top:59px;color:#008080">9</b>
<b style="left:728px;top:59px;color:#008000">96.</b>
<b style="left:749px;top:59px;color:#800000">1</b>
<b style="left:756px;top:59px;color:#808080">%</b>
<b style="left:406px;top:71px;color:#008080">10</b>
<b style="left:728px;top:71px;color:#008000">96.</b>
<b style="left:749px;top:71px;color:#800000">7</b>
<b style="left:756px;top:71px;color:#808080">%</b>
<b style="left:406px;top:83px;color:#008080">11</b>
<b style="left:728px;top:83px;color:#008000">99.4</b>
<b style="left:756px;top:83px;color:#800000">%</b>
<b style="left:406px;top:95px;color:#008080">12</b>
<b style="left:721px;top:95px;color:#008000">100.0%</b>
<b style="left:791px;top:35px;color:#008080">13</b>
<b style="left:1106px;top:35px;color:#008000">100.0%</b>
<b style="left:791px;top:47px;color:#008080">14</b>
<b style="left:1106px;top:47px;color:#008000">100.0%</b>
<b style="left:791px;top:59px;color:#008080">15</b>
<b style="left:1113px;top:59px;color:#008000">96</b>
<b style="left:1127px;top:59px;color:#800000">.7</b>
<b style="left:1141px;top:59px;color:#808080">%</b>
<b style="left:791px;top:71px;color:#008080">16</b>
<b style="left:1113px;top:71px;color:#008000">97.</b>
<b style="left:1134px;top:71px;color:#800000">4%</b>
<b style="left:791px;top:83px;color:#008080">17</b>
<b style="left:1113px;top:83px;color:#008000">99.4%</b>
<b style="left:791px;top:95px;color:#008080">18</b>
<b style="left:1113px;top:95px;color:#008000">99.4%</b>
<b style="left:1183px;top:35px;color:#008080">19</b>
<b style="left:1505px;top:35px;color:#008000">96</b>
<b style="left:1519px;top:35px;color:#800000">.8%</b>
<b style="left:1183px;top:47px;color:#008080">20</b>
<b style="left:1498px;top:47px;color:#008000">100.0%</b>
<b style="left:1183px;top:59px;color:#008080">21</b>
<b style="left:1505px;top:59px;color:#008000">99.4%</b>
<b style="left:1183px;top:71px;color:#008080">22</b>
<b style="left:1505px;top:71px;color:#008000">99.4</b>
<b style="left:1533px;top:71px;color:#800000">%</b>
<b style="left:1183px;top:83px;color:#008080">23</b>
<b style="left:1498px;top:83px;color:#008000">100.0%</b>
<b style="left:1183px;top:95px;color:#008080">24</b>
<b style="left:1498px;top:95px;color:#008000">100.0%</b>
<b style="left:14px;top:107px;color:#008080">Mem</b>
<b style="left:686px;top:107px;color:#808080">39.3G/94.4G</b>
<b style="left:14px;top:119px;color:#008080">Swp</b>
<b style="left:707px;top:119px;color:#808080">0K/7.45G</b>
<b style="left:791px;top:107px;color:#008080">Tasks:</b>
<b style="left:840px;top:107px;color:#00ffff">70</b>
<b style="left:854px;top:107px;color:#008080">,</b>
<b style="left:868px;top:107px;color:#0000ff">49</b>
<b style="left:889px;top:107px;color:#008000">thr</b>
<b style="left:910px;top:107px;color:#008080">;</b>
<b style="left:924px;top:107px;color:#0000ff">24</b>
<b style="left:945px;top:107px;color:#008080">running</b>
<b style="left:791px;top:119px;color:#008080">Load</b>
<b style="left:826px;top:119px;color:#008080">average:</b>
<b style="left:889px;top:119px;color:#ffffff">22.83</b>
<b style="left:931px;top:119px;color:#00ffff">18.83</b>
<b style="left:973px;top:119px;color:#008080">13.18</b>
<b style="left:791px;top:131px;color:#008080">Uptime:</b>
<b style="left:847px;top:131px;color:#00ffff">2</b>
<b style="left:861px;top:131px;color:#00ffff">days,</b>
<b style="left:903px;top:131px;color:#00ffff">22:04:30</b>
<b style="left:14px;top:155px;color:#000000">PID</b>
<b style="left:42px;top:155px;color:#000000">USER</b>
<b style="left:112px;top:155px;color:#000000">PRI</b>
<b style="left:147px;top:155px;color:#000000">NI</b>
<b style="left:182px;top:155px;color:#000000">RES</b>
<b style="left:224px;top:155px;color:#000000">SHR</b>
<b style="left:252px;top:155px;color:#000000">S</b>
<b style="left:266px;top:155px;color:#000000">CPU%</b>
<b style="left:301px;top:155px;color:#000000">MEM%</b>
<b style="left:350px;top:155px;color:#000000">TIME+</b>
<b style="left:399px;top:155px;color:#000000">Command</b>
<b style="left:0px;top:167px;color:#c0c0c0">22066</b>
<b style="left:42px;top:167px;color:#808080">www-data</b>
<b style="left:119px;top:167px;color:#c0c0c0">20</b>
<b style="left:154px;top:167px;color:#c0c0c0">0</b>
<b style="left:175px;top:167px;color:#008080">5</b>
<b style="left:182px;top:167px;color:#c0c0c0">772</b>
<b style="left:217px;top:167px;color:#008080">3</b>
<b style="left:224px;top:167px;color:#c0c0c0">956</b>
<b style="left:252px;top:167px;color:#c0c0c0">S</b>
<b style="left:273px;top:167px;color:#c0c0c0">0.0</b>
<b style="left:308px;top:167px;color:#c0c0c0">0.0</b>
<b style="left:343px;top:167px;color:#c0c0c0">0:00.00</b>
<b style="left:441px;top:167px;color:#00ffff">nginx:</b>
<b style="left:490px;top:167px;color:#c0c0c0">worker</b>
<b style="left:539px;top:167px;color:#c0c0c0">process</b>
<b style="left:0px;top:179px;color:#c0c0c0">22065</b>
<b style="left:42px;top:179px;color:#808080">www-data</b>
<b style="left:119px;top:179px;color:#c0c0c0">20</b>
<b style="left:154px;top:179px;color:#c0c0c0">0</b>
<b style="left:175px;top:179px;color:#008080">5</b>
<b style="left:182px;top:179px;color:#c0c0c0">588</b>
<b style="left:217px;top:179px;color:#008080">3</b>
<b style="left:224px;top:179px;color:#c0c0c0">788</b>
<b style="left:252px;top:179px;color:#c0c0c0">S</b>
<b style="left:273px;top:179px;color:#c0c0c0">0.0</b>
<b style="left:308px;top:179px;color:#c0c0c0">0.0</b>
<b style="left:343px;top:179px;color:#c0c0c0">0:00.00</b>
<b style="left:441px;top:179px;color:#00ffff">nginx:</b>
<b style="left:490px;top:179px;color:#c0c0c0">worker</b>
<b style="left:539px;top:179px;color:#c0c0c0">process</b>
<b style="left:0px;top:191px;color:#c0c0c0">22064</b>
<b style="left:42px;top:191px;color:#808080">www-data</b>
<b style="left:119px;top:191px;color:#c0c0c0">20</b>
<b style="left:154px;top:191px;color:#c0c0c0">0</b>
<b style="left:175px;top:191px;color:#008080">5</b>
<b style="left:182px;top:191px;color:#c0c0c0">496</b>
<b style="left:217px;top:191px;color:#008080">3</b>
<b style="left:224px;top:191px;color:#c0c0c0">684</b>
<b style="left:252px;top:191px;color:#c0c0c0">S</b>
<b style="left:273px;top:191px;color:#c0c0c0">0.0</b>
<b style="left:308px;top:191px;color:#c0c0c0">0.0</b>
<b style="left:343px;top:191px;color:#c0c0c0">0:00.00</b>
<b style="left:441px;top:191px;color:#00ffff">nginx:</b>
<b style="left:490px;top:191px;color:#c0c0c0">worker</b>
<b style="left:539px;top:191px;color:#c0c0c0">process</b>
<b style="left:0px;top:203px;color:#c0c0c0">22063</b>
<b style="left:42px;top:203px;color:#808080">www-data</b>
<b style="left:119px;top:203px;color:#c0c0c0">20</b>
<b style="left:154px;top:203px;color:#c0c0c0">0</b>
<b style="left:175px;top:203px;color:#008080">5</b>
<b style="left:182px;top:203px;color:#c0c0c0">628</b>
<b style="left:217px;top:203px;color:#008080">3</b>
<b style="left:224px;top:203px;color:#c0c0c0">828</b>
<b style="left:252px;top:203px;color:#c0c0c0">S</b>
<b style="left:273px;top:203px;color:#c0c0c0">0.0</b>
<b style="left:308px;top:203px;color:#c0c0c0">0.0</b>
<b style="left:343px;top:203px;color:#c0c0c0">0:00.00</b>
<b style="left:441px;top:203px;color:#00ffff">nginx:</b>
<b style="left:490px;top:203px;color:#c0c0c0">worker</b>
<b style="left:539px;top:203px;color:#c0c0c0">process</b>
<b style="left:0px;top:215px;color:#c0c0c0">22062</b>
<b style="left:42px;top:215px;color:#808080">www-data</b>
<b style="left:119px;top:215px;color:#c0c0c0">20</b>
<b style="left:154px;top:215px;color:#c0c0c0">0</b>
<b style="left:175px;top:215px;color:#008080">5</b>
<b style="left:182px;top:215px;color:#c0c0c0">496</b>
<b style="left:217px;top:215px;color:#008080">3</b>
<b style="left:224px;top:215px;color:#c0c0c0">688</b>
<b style="left:252px;top:215px;color:#c0c0c0">S</b>
<b style="left:273px;top:215px;color:#c0c0c0">0.0</b>
<b style="left:308px;top:215px;color:#c0c0c0">0.0</b>
<b style="left:343px;top:215px;color:#c0c0c0">0:00.00</b>
<b style="left:441px;top:215px;color:#00ffff">nginx:</b>
<b style="left:490px;top:215px;color:#c0c0c0">worker</b>
<b style="left:539px;top:215px;color:#c0c0c0">process</b>
<b style="left:0px;top:227px;color:#c0c0c0">22061</b>
<b style="left:42px;top:227px;color:#808080">www-data</b>
<b style="left:119px;top:227px;color:#c0c0c0">20</b>
<b style="left:154px;top:227px;color:#c0c0c0">0</b>
<b style="left:175px;top:227px;color:#008080">5</b>
<b style="left:182px;top:227px;color:#c0c0c0">772</b>
<b style="left:217px;top:227px;color:#008080">3</b>
<b style="left:224px;top:227px;color:#c0c0c0">956</b>
<b style="left:252px;top:227px;color:#c0c0c0">S</b>
<b style="left:273px;top:227px;color:#c0c0c0">0.0</b>
<b style="left:308px;top:227px;color:#c0c0c0">0.0</b>
<b style="left:343px;top:227px;color:#c0c0c0">0:00.00</b>
<b style="left:441px;top:227px;color:#00ffff">nginx:</b>
<b style="left:490px;top:227px;color:#c0c0c0">worker</b>
<b style="left:539px;top:227px;color:#c0c0c0">process</b>
<b style="left:0px;top:239px;color:#c0c0c0">22060</b>
<b style="left:42px;top:239px;color:#808080">www-data</b>
<b style="left:119px;top:239px;color:#c0c0c0">20</b>
<b style="left:154px;top:239px;color:#c0c0c0">0</b>
<b style="left:175px;top:239px;color:#008080">5</b>
<b style="left:182px;top:239px;color:#c0c0c0">672</b>
<b style="left:217px;top:239px;color:#008080">3</b>
<b style="left:224px;top:239px;color:#c0c0c0">856</b>
<b style="left:252px;top:239px;color:#c0c0c0">S</b>
<b style="left:273px;top:239px;color:#c0c0c0">0.0</b>
<b style="left:308px;top:239px;color:#c0c0c0">0.0</b>
<b style="left:343px;top:239px;color:#c0c0c0">0:00.00</b>
<b style="left:441px;top:239px;color:#00ffff">nginx:</b>
<b style="left:490px;top:239px;color:#c0c0c0">worker</b>
<b style="left:539px;top:239px;color:#c0c0c0">process</b>
<b style="left:0px;top:251px;color:#c0c0c0">22059</b>
<b style="left:42px;top:251px;color:#808080">www-data</b>
<b style="left:119px;top:251px;color:#c0c0c0">20</b>
<b style="left:154px;top:251px;color:#c0c0c0">0</b>
<b style="left:175px;top:251px;color:#008080">5</b>
<b style="left:182px;top:251px;color:#c0c0c0">516</b>
<b style="left:217px;top:251px;color:#008080">3</b>
<b style="left:224px;top:251px;color:#c0c0c0">716</b>
<b style="left:252px;top:251px;color:#c0c0c0">S</b>
<b style="left:273px;top:251px;color:#c0c0c0">0.0</b>
<b style="left:308px;top:251px;color:#c0c0c0">0.0</b>
<b style="left:343px;top:251px;color:#c0c0c0">0:00.00</b>
<b style="left:441px;top:251px;color:#00ffff">nginx:</b>
<b style="left:490px;top:251px;color:#c0c0c0">worker</b>
<b style="left:539px;top:251px;color:#c0c0c0">process</b>
<b style="left:0px;top:263px;color:#c0c0c0">22058</b>
<b style="left:42px;top:263px;color:#808080">www-data</b>
<b style="left:119px;top:263px;color:#c0c0c0">20</b>
<b style="left:154px;top:263px;color:#c0c0c0">0</b>
<b style="left:175px;top:263px;color:#008080">5</b>
<b style="left:182px;top:263px;color:#c0c0c0">764</b>
<b style="left:217px;top:263px;color:#008080">3</b>
<b style="left:224px;top:263px;color:#c0c0c0">952</b>
<b style="left:252px;top:263px;color:#c0c0c0">S</b>
<b style="left:273px;top:263px;color:#c0c0c0">0.0</b>
<b style="left:308px;top:263px;color:#c0c0c0">0.0</b>
<b style="left:343px;top:263px;color:#c0c0c0">0:00.00</b>
<b style="left:441px;top:263px;color:#00ffff">nginx:</b>
<b style="left:490px;top:263px;color:#c0c0c0">worker</b>
<b style="left:539px;top:263px;color:#c0c0c0">process</b>
<b style="left:0px;top:275px;color:#000000">21663</b>
<b style="left:42px;top:275px;color:#000000">nabijaczl</b>
<b style="left:119px;top:275px;color:#000000">20</b>
<b style="left:154px;top:275px;color:#000000">0</b>
<b style="left:175px;top:275px;color:#000000">3</b>
<b style="left:182px;top:275px;color:#000000">156</b>
<b style="left:217px;top:275px;color:#000000">1</b>
<b style="left:224px;top:275px;color:#000000">468</b>
<b style="left:252px;top:275px;color:#000000">S</b>
<b style="left:273px;top:275px;color:#000000">0.0</b>
<b style="left:308px;top:275px;color:#000000">0.0</b>
<b style="left:343px;top:275px;color:#000000">0:00.00</b>
<b style="left:420px;top:275px;color:#000000">-bash</b>
<b style="left:0px;top:287px;color:#c0c0c0">21666</b>
<b style="left:42px;top:287px;color:#c0c0c0">nabijaczl</b>
<b style="left:119px;top:287px;color:#c0c0c0">20</b>
<b style="left:154px;top:287px;color:#c0c0c0">0</b>
<b style="left:182px;top:287px;color:#c0c0c0">684</b>
<b style="left:224px;top:287px;color:#c0c0c0">624</b>
<b style="left:252px;top:287px;color:#c0c0c0">S</b>
<b style="left:273px;top:287px;color:#c0c0c0">0.0</b>
<b style="left:308px;top:287px;color:#c0c0c0">0.0</b>
<b style="left:343px;top:287px;color:#c0c0c0">0:00.12</b>
<b style="left:441px;top:287px;color:#00ffff">tee</b>
<b style="left:469px;top:287px;color:#c0c0c0">2160ish_postop_19_5.log</b>
<b style="left:0px;top:299px;color:#c0c0c0">21665</b>
<b style="left:42px;top:299px;color:#c0c0c0">nabijaczl</b>
<b style="left:119px;top:299px;color:#c0c0c0">20</b>
<b style="left:154px;top:299px;color:#c0c0c0">0</b>
<b style="left:175px;top:299px;color:#008080">3</b>
<b style="left:182px;top:299px;color:#c0c0c0">136</b>
<b style="left:217px;top:299px;color:#008080">1</b>
<b style="left:224px;top:299px;color:#c0c0c0">448</b>
<b style="left:252px;top:299px;color:#c0c0c0">S</b>
<b style="left:273px;top:299px;color:#c0c0c0">0.0</b>
<b style="left:308px;top:299px;color:#c0c0c0">0.0</b>
<b style="left:343px;top:299px;color:#c0c0c0">0:00.00</b>
<b style="left:441px;top:299px;color:#00ffff">-bash</b>
<b style="left:0px;top:311px;color:#c0c0c0">21667</b>
<b style="left:42px;top:311px;color:#c0c0c0">nabijaczl</b>
<b style="left:119px;top:311px;color:#c0c0c0">20</b>
<b style="left:154px;top:311px;color:#c0c0c0">0</b>
<b style="left:168px;top:311px;color:#ff0000">37.4G</b>
<b style="left:217px;top:311px;color:#008080">3</b>
<b style="left:224px;top:311px;color:#c0c0c0">740</b>
<b style="left:252px;top:311px;color:#c0c0c0">S</b>
<b style="left:266px;top:311px;color:#c0c0c0">2373</b>
<b style="left:301px;top:311px;color:#c0c0c0">39.7</b>
<b style="left:343px;top:311px;color:#ff0000">4h</b>
<b style="left:357px;top:311px;color:#c0c0c0">07:41</b>
<b style="left:462px;top:311px;color:#c0c0c0">/home/nabijaczleweli/projects/rust-target/release/</b>
<b style="left:812px;top:311px;color:#00ffff">mandalas</b>
<b style="left:875px;top:311px;color:#c0c0c0">-s2160x2160x2160</b>
<b style="left:994px;top:311px;color:#c0c0c0">-j19</b>
<b style="left:1029px;top:311px;color:#c0c0c0">-J5</b>
<b style="left:1057px;top:311px;color:#c0c0c0">-o</b>
<b style="left:1078px;top:311px;color:#c0c0c0">2160ish_postop_19_5</b>
<b style="left:0px;top:323px;color:#c0c0c0">21691</b>
<b style="left:42px;top:323px;color:#c0c0c0">nabijaczl</b>
<b style="left:119px;top:323px;color:#c0c0c0">20</b>
<b style="left:154px;top:323px;color:#c0c0c0">0</b>
<b style="left:168px;top:323px;color:#ff0000">37.4G</b>
<b style="left:217px;top:323px;color:#008080">3</b>
<b style="left:224px;top:323px;color:#c0c0c0">740</b>
<b style="left:252px;top:323px;color:#008000">R</b>
<b style="left:266px;top:323px;color:#c0c0c0">95.9</b>
<b style="left:301px;top:323px;color:#c0c0c0">39.7</b>
<b style="left:336px;top:323px;color:#c0c0c0">10:47.43</b>
<b style="left:483px;top:323px;color:#008000">collector</b>
<b style="left:553px;top:323px;color:#008000">4</b>
<b style="left:0px;top:335px;color:#c0c0c0">21690</b>
<b style="left:42px;top:335px;color:#c0c0c0">nabijaczl</b>
<b style="left:119px;top:335px;color:#c0c0c0">20</b>
<b style="left:154px;top:335px;color:#c0c0c0">0</b>
<b style="left:168px;top:335px;color:#ff0000">37.4G</b>
<b style="left:217px;top:335px;color:#008080">3</b>
<b style="left:224px;top:335px;color:#c0c0c0">740</b>
<b style="left:252px;top:335px;color:#008000">R</b>
<b style="left:266px;top:335px;color:#c0c0c0">97.2</b>
<b style="left:301px;top:335px;color:#c0c0c0">39.7</b>
<b style="left:336px;top:335px;color:#c0c0c0">12:05.34</b>
<b style="left:483px;top:335px;color:#008000">collector</b>
<b style="left:553px;top:335px;color:#008000">3</b>
<b style="left:0px;top:347px;color:#c0c0c0">21689</b>
<b style="left:42px;top:347px;color:#c0c0c0">nabijaczl</b>
<b style="left:119px;top:347px;color:#c0c0c0">20</b>
<b style="left:154px;top:347px;color:#c0c0c0">0</b>
<b style="left:168px;top:347px;color:#ff0000">37.4G</b>
<b style="left:217px;top:347px;color:#008080">3</b>
<b style="left:224px;top:347px;color:#c0c0c0">740</b>
<b style="left:252px;top:347px;color:#008000">R</b>
<b style="left:266px;top:347px;color:#c0c0c0">97.9</b>
<b style="left:301px;top:347px;color:#c0c0c0">39.7</b>
<b style="left:336px;top:347px;color:#c0c0c0">10:55.00</b>
<b style="left:483px;top:347px;color:#008000">collector</b>
<b style="left:553px;top:347px;color:#008000">2</b>
<b style="left:0px;top:359px;color:#c0c0c0">21688</b>
<b style="left:42px;top:359px;color:#c0c0c0">nabijaczl</b>
<b style="left:119px;top:359px;color:#c0c0c0">20</b>
<b style="left:154px;top:359px;color:#c0c0c0">0</b>
<b style="left:168px;top:359px;color:#ff0000">37.4G</b>
<b style="left:217px;top:359px;color:#008080">3</b>
<b style="left:224px;top:359px;color:#c0c0c0">740</b>
<b style="left:252px;top:359px;color:#008000">R</b>
<b style="left:266px;top:359px;color:#c0c0c0">97.2</b>
<b style="left:301px;top:359px;color:#c0c0c0">39.7</b>
<b style="left:336px;top:359px;color:#c0c0c0">10:32.53</b>
<b style="left:483px;top:359px;color:#008000">collector</b>
<b style="left:553px;top:359px;color:#008000">1</b>
<b style="left:0px;top:371px;color:#c0c0c0">21687</b>
<b style="left:42px;top:371px;color:#c0c0c0">nabijaczl</b>
<b style="left:119px;top:371px;color:#c0c0c0">20</b>
<b style="left:154px;top:371px;color:#c0c0c0">0</b>
<b style="left:168px;top:371px;color:#ff0000">37.4G</b>
<b style="left:217px;top:371px;color:#008080">3</b>
<b style="left:224px;top:371px;color:#c0c0c0">740</b>
<b style="left:252px;top:371px;color:#008000">R</b>
<b style="left:266px;top:371px;color:#c0c0c0">97.2</b>
<b style="left:301px;top:371px;color:#c0c0c0">39.7</b>
<b style="left:336px;top:371px;color:#c0c0c0">11:50.35</b>
<b style="left:483px;top:371px;color:#008000">collector</b>
<b style="left:553px;top:371px;color:#008000">0</b>
<b style="left:0px;top:383px;color:#c0c0c0">21686</b>
<b style="left:42px;top:383px;color:#c0c0c0">nabijaczl</b>
<b style="left:119px;top:383px;color:#c0c0c0">20</b>
<b style="left:154px;top:383px;color:#c0c0c0">0</b>
<b style="left:168px;top:383px;color:#ff0000">37.4G</b>
<b style="left:217px;top:383px;color:#008080">3</b>
<b style="left:224px;top:383px;color:#c0c0c0">740</b>
<b style="left:252px;top:383px;color:#008000">R</b>
<b style="left:266px;top:383px;color:#c0c0c0">98.5</b>
<b style="left:301px;top:383px;color:#c0c0c0">39.7</b>
<b style="left:336px;top:383px;color:#c0c0c0">10:09.50</b>
<b style="left:483px;top:383px;color:#008000">generator</b>
<b style="left:553px;top:383px;color:#008000">18</b>
<b style="left:0px;top:395px;color:#c0c0c0">21685</b>
<b style="left:42px;top:395px;color:#c0c0c0">nabijaczl</b>
<b style="left:119px;top:395px;color:#c0c0c0">20</b>
<b style="left:154px;top:395px;color:#c0c0c0">0</b>
<b style="left:168px;top:395px;color:#ff0000">37.4G</b>
<b style="left:217px;top:395px;color:#008080">3</b>
<b style="left:224px;top:395px;color:#c0c0c0">740</b>
<b style="left:252px;top:395px;color:#008000">R</b>
<b style="left:266px;top:395px;color:#c0c0c0">99.2</b>
<b style="left:301px;top:395px;color:#c0c0c0">39.7</b>
<b style="left:343px;top:395px;color:#c0c0c0">9:55.81</b>
<b style="left:483px;top:395px;color:#008000">generator</b>
<b style="left:553px;top:395px;color:#008000">17</b>
<b style="left:0px;top:407px;color:#c0c0c0">21684</b>
<b style="left:42px;top:407px;color:#c0c0c0">nabijaczl</b>
<b style="left:119px;top:407px;color:#c0c0c0">20</b>
<b style="left:154px;top:407px;color:#c0c0c0">0</b>
<b style="left:168px;top:407px;color:#ff0000">37.4G</b>
<b style="left:217px;top:407px;color:#008080">3</b>
<b style="left:224px;top:407px;color:#c0c0c0">740</b>
<b style="left:252px;top:407px;color:#008000">R</b>
<b style="left:266px;top:407px;color:#c0c0c0">97.9</b>
<b style="left:301px;top:407px;color:#c0c0c0">39.7</b>
<b style="left:336px;top:407px;color:#c0c0c0">10:04.07</b>
<b style="left:483px;top:407px;color:#008000">generator</b>
<b style="left:553px;top:407px;color:#008000">16</b>
<b style="left:0px;top:419px;color:#c0c0c0">21683</b>
<b style="left:42px;top:419px;color:#c0c0c0">nabijaczl</b>
<b style="left:119px;top:419px;color:#c0c0c0">20</b>
<b style="left:154px;top:419px;color:#c0c0c0">0</b>
<b style="left:168px;top:419px;color:#ff0000">37.4G</b>
<b style="left:217px;top:419px;color:#008080">3</b>
<b style="left:224px;top:419px;color:#c0c0c0">740</b>
<b style="left:252px;top:419px;color:#008000">R</b>
<b style="left:266px;top:419px;color:#c0c0c0">99.8</b>
<b style="left:301px;top:419px;color:#c0c0c0">39.7</b>
<b style="left:343px;top:419px;color:#c0c0c0">9:58.26</b>
<b style="left:483px;top:419px;color:#008000">generator</b>
<b style="left:553px;top:419px;color:#008000">15</b>
<b style="left:0px;top:431px;color:#c0c0c0">21682</b>
<b style="left:42px;top:431px;color:#c0c0c0">nabijaczl</b>
<b style="left:119px;top:431px;color:#c0c0c0">20</b>
<b style="left:154px;top:431px;color:#c0c0c0">0</b>
<b style="left:168px;top:431px;color:#ff0000">37.4G</b>
<b style="left:217px;top:431px;color:#008080">3</b>
<b style="left:224px;top:431px;color:#c0c0c0">740</b>
<b style="left:252px;top:431px;color:#008000">R</b>
<b style="left:266px;top:431px;color:#c0c0c0">99.2</b>
<b style="left:301px;top:431px;color:#c0c0c0">39.7</b>
<b style="left:336px;top:431px;color:#c0c0c0">10:05.40</b>
<b style="left:483px;top:431px;color:#008000">generator</b>
<b style="left:553px;top:431px;color:#008000">14</b>
<b style="left:0px;top:443px;color:#c0c0c0">21681</b>
<b style="left:42px;top:443px;color:#c0c0c0">nabijaczl</b>
<b style="left:119px;top:443px;color:#c0c0c0">20</b>
<b style="left:154px;top:443px;color:#c0c0c0">0</b>
<b style="left:168px;top:443px;color:#ff0000">37.4G</b>
<b style="left:217px;top:443px;color:#008080">3</b>
<b style="left:224px;top:443px;color:#c0c0c0">740</b>
<b style="left:252px;top:443px;color:#008000">R</b>
<b style="left:266px;top:443px;color:#c0c0c0">100.</b>
<b style="left:301px;top:443px;color:#c0c0c0">39.7</b>
<b style="left:343px;top:443px;color:#c0c0c0">9:59.96</b>
<b style="left:483px;top:443px;color:#008000">generator</b>
<b style="left:553px;top:443px;color:#008000">13</b>
<b style="left:0px;top:455px;color:#c0c0c0">21680</b>
<b style="left:42px;top:455px;color:#c0c0c0">nabijaczl</b>
<b style="left:119px;top:455px;color:#c0c0c0">20</b>
<b style="left:154px;top:455px;color:#c0c0c0">0</b>
<b style="left:168px;top:455px;color:#ff0000">37.4G</b>
<b style="left:217px;top:455px;color:#008080">3</b>
<b style="left:224px;top:455px;color:#c0c0c0">740</b>
<b style="left:252px;top:455px;color:#008000">R</b>
<b style="left:266px;top:455px;color:#c0c0c0">99.2</b>
<b style="left:301px;top:455px;color:#c0c0c0">39.7</b>
<b style="left:336px;top:455px;color:#c0c0c0">10:10.68</b>
<b style="left:483px;top:455px;color:#008000">generator</b>
<b style="left:553px;top:455px;color:#008000">12</b>
<b style="left:0px;top:467px;color:#c0c0c0">21679</b>
<b style="left:42px;top:467px;color:#c0c0c0">nabijaczl</b>
<b style="left:119px;top:467px;color:#c0c0c0">20</b>
<b style="left:154px;top:467px;color:#c0c0c0">0</b>
<b style="left:168px;top:467px;color:#ff0000">37.4G</b>
<b style="left:217px;top:467px;color:#008080">3</b>
<b style="left:224px;top:467px;color:#c0c0c0">740</b>
<b style="left:252px;top:467px;color:#008000">R</b>
<b style="left:266px;top:467px;color:#c0c0c0">99.8</b>
<b style="left:301px;top:467px;color:#c0c0c0">39.7</b>
<b style="left:336px;top:467px;color:#c0c0c0">10:05.42</b>
<b style="left:483px;top:467px;color:#008000">generator</b>
<b style="left:553px;top:467px;color:#008000">11</b>
<b style="left:0px;top:479px;color:#c0c0c0">21678</b>
<b style="left:42px;top:479px;color:#c0c0c0">nabijaczl</b>
<b style="left:119px;top:479px;color:#c0c0c0">20</b>
<b style="left:154px;top:479px;color:#c0c0c0">0</b>
<b style="left:168px;top:479px;color:#ff0000">37.4G</b>
<b style="left:217px;top:479px;color:#008080">3</b>
<b style="left:224px;top:479px;color:#c0c0c0">740</b>
<b style="left:252px;top:479px;color:#008000">R</b>
<b style="left:266px;top:479px;color:#c0c0c0">99.2</b>
<b style="left:301px;top:479px;color:#c0c0c0">39.7</b>
<b style="left:336px;top:479px;color:#c0c0c0">10:01.01</b>
<b style="left:483px;top:479px;color:#008000">generator</b>
<b style="left:553px;top:479px;color:#008000">10</b>
<b style="left:0px;top:491px;color:#c0c0c0">21677</b>
<b style="left:42px;top:491px;color:#c0c0c0">nabijaczl</b>
<b style="left:119px;top:491px;color:#c0c0c0">20</b>
<b style="left:154px;top:491px;color:#c0c0c0">0</b>
<b style="left:168px;top:491px;color:#ff0000">37.4G</b>
<b style="left:217px;top:491px;color:#008080">3</b>
<b style="left:224px;top:491px;color:#c0c0c0">740</b>
<b style="left:252px;top:491px;color:#008000">R</b>
<b style="left:266px;top:491px;color:#c0c0c0">99.2</b>
<b style="left:301px;top:491px;color:#c0c0c0">39.7</b>
<b style="left:336px;top:491px;color:#c0c0c0">10:07.06</b>
<b style="left:483px;top:491px;color:#008000">generator</b>
<b style="left:553px;top:491px;color:#008000">9</b>
<b style="left:0px;top:503px;color:#c0c0c0">21676</b>
<b style="left:42px;top:503px;color:#c0c0c0">nabijaczl</b>
<b style="left:119px;top:503px;color:#c0c0c0">20</b>
<b style="left:154px;top:503px;color:#c0c0c0">0</b>
<b style="left:168px;top:503px;color:#ff0000">37.4G</b>
<b style="left:217px;top:503px;color:#008080">3</b>
<b style="left:224px;top:503px;color:#c0c0c0">740</b>
<b style="left:252px;top:503px;color:#008000">R</b>
<b style="left:266px;top:503px;color:#c0c0c0">99.2</b>
<b style="left:301px;top:503px;color:#c0c0c0">39.7</b>
<b style="left:336px;top:503px;color:#c0c0c0">10:07.56</b>
<b style="left:483px;top:503px;color:#008000">generator</b>
<b style="left:553px;top:503px;color:#008000">8</b>
<b style="left:0px;top:515px;color:#c0c0c0">21675</b>
<b style="left:42px;top:515px;color:#c0c0c0">nabijaczl</b>
<b style="left:119px;top:515px;color:#c0c0c0">20</b>
<b style="left:154px;top:515px;color:#c0c0c0">0</b>
<b style="left:168px;top:515px;color:#ff0000">37.4G</b>
<b style="left:217px;top:515px;color:#008080">3</b>
<b style="left:224px;top:515px;color:#c0c0c0">740</b>
<b style="left:252px;top:515px;color:#008000">R</b>
<b style="left:266px;top:515px;color:#c0c0c0">99.8</b>
<b style="left:301px;top:515px;color:#c0c0c0">39.7</b>
<b style="left:336px;top:515px;color:#c0c0c0">10:07.52</b>
<b style="left:483px;top:515px;color:#008000">generator</b>
<b style="left:553px;top:515px;color:#008000">7</b>
<b style="left:0px;top:527px;color:#c0c0c0">21674</b>
<b style="left:42px;top:527px;color:#c0c0c0">nabijaczl</b>
<b style="left:119px;top:527px;color:#c0c0c0">20</b>
<b style="left:154px;top:527px;color:#c0c0c0">0</b>
<b style="left:168px;top:527px;color:#ff0000">37.4G</b>
<b style="left:217px;top:527px;color:#008080">3</b>
<b style="left:224px;top:527px;color:#c0c0c0">740</b>
<b style="left:252px;top:527px;color:#008000">R</b>
<b style="left:266px;top:527px;color:#c0c0c0">99.8</b>
<b style="left:301px;top:527px;color:#c0c0c0">39.7</b>
<b style="left:336px;top:527px;color:#c0c0c0">10:03.55</b>
<b style="left:483px;top:527px;color:#008000">generator</b>
<b style="left:553px;top:527px;color:#008000">6</b>
<b style="left:0px;top:539px;color:#c0c0c0">21673</b>
<b style="left:42px;top:539px;color:#c0c0c0">nabijaczl</b>
<b style="left:119px;top:539px;color:#c0c0c0">20</b>
<b style="left:154px;top:539px;color:#c0c0c0">0</b>
<b style="left:168px;top:539px;color:#ff0000">37.4G</b>
<b style="left:217px;top:539px;color:#008080">3</b>
<b style="left:224px;top:539px;color:#c0c0c0">740</b>
<b style="left:252px;top:539px;color:#008000">R</b>
<b style="left:266px;top:539px;color:#c0c0c0">99.2</b>
<b style="left:301px;top:539px;color:#c0c0c0">39.7</b>
<b style="left:336px;top:539px;color:#c0c0c0">10:03.83</b>
<b style="left:483px;top:539px;color:#008000">generator</b>
<b style="left:553px;top:539px;color:#008000">5</b>
<b style="left:0px;top:551px;color:#c0c0c0">21672</b>
<b style="left:42px;top:551px;color:#c0c0c0">nabijaczl</b>
<b style="left:119px;top:551px;color:#c0c0c0">20</b>
<b style="left:154px;top:551px;color:#c0c0c0">0</b>
<b style="left:168px;top:551px;color:#ff0000">37.4G</b>
<b style="left:217px;top:551px;color:#008080">3</b>
<b style="left:224px;top:551px;color:#c0c0c0">740</b>
<b style="left:252px;top:551px;color:#008000">R</b>
<b style="left:266px;top:551px;color:#c0c0c0">99.8</b>
<b style="left:301px;top:551px;color:#c0c0c0">39.7</b>
<b style="left:336px;top:551px;color:#c0c0c0">10:05.83</b>
<b style="left:483px;top:551px;color:#008000">generator</b>
<b style="left:553px;top:551px;color:#008000">4</b>
<b style="left:0px;top:563px;color:#c0c0c0">21671</b>
<b style="left:42px;top:563px;color:#c0c0c0">nabijaczl</b>
<b style="left:119px;top:563px;color:#c0c0c0">20</b>
<b style="left:154px;top:563px;color:#c0c0c0">0</b>
<b style="left:168px;top:563px;color:#ff0000">37.4G</b>
<b style="left:217px;top:563px;color:#008080">3</b>
<b style="left:224px;top:563px;color:#c0c0c0">740</b>
<b style="left:252px;top:563px;color:#008000">R</b>
<b style="left:266px;top:563px;color:#c0c0c0">98.5</b>
<b style="left:301px;top:563px;color:#c0c0c0">39.7</b>
<b style="left:336px;top:563px;color:#c0c0c0">10:08.14</b>
<b style="left:483px;top:563px;color:#008000">generator</b>
<b style="left:553px;top:563px;color:#008000">3</b>
<b style="left:0px;top:575px;color:#c0c0c0">21670</b>
<b style="left:42px;top:575px;color:#c0c0c0">nabijaczl</b>
<b style="left:119px;top:575px;color:#c0c0c0">20</b>
<b style="left:154px;top:575px;color:#c0c0c0">0</b>
<b style="left:168px;top:575px;color:#ff0000">37.4G</b>
<b style="left:217px;top:575px;color:#008080">3</b>
<b style="left:224px;top:575px;color:#c0c0c0">740</b>
<b style="left:252px;top:575px;color:#008000">R</b>
<b style="left:266px;top:575px;color:#c0c0c0">99.8</b>
<b style="left:301px;top:575px;color:#c0c0c0">39.7</b>
<b style="left:343px;top:575px;color:#c0c0c0">9:57.26</b>
<b style="left:483px;top:575px;color:#008000">generator</b>
<b style="left:553px;top:575px;color:#008000">2</b>
<b style="left:0px;top:587px;color:#c0c0c0">21669</b>
<b style="left:42px;top:587px;color:#c0c0c0">nabijaczl</b>
<b style="left:119px;top:587px;color:#c0c0c0">20</b>
<b style="left:154px;top:587px;color:#c0c0c0">0</b>
<b style="left:168px;top:587px;color:#ff0000">37.4G</b>
<b style="left:217px;top:587px;color:#008080">3</b>
<b style="left:224px;top:587px;color:#c0c0c0">740</b>
<b style="left:252px;top:587px;color:#008000">R</b>
<b style="left:266px;top:587px;color:#c0c0c0">99.8</b>
<b style="left:301px;top:587px;color:#c0c0c0">39.7</b>
<b style="left:336px;top:587px;color:#c0c0c0">10:07.83</b>
<b style="left:483px;top:587px;color:#008000">generator</b>
<b style="left:553px;top:587px;color:#008000">1</b>
<b style="left:0px;top:599px;color:#c0c0c0">21668</b>
<b style="left:42px;top:599px;color:#c0c0c0">nabijaczl</b>
<b style="left:119px;top:599px;color:#c0c0c0">20</b>
<b style="left:154px;top:599px;color:#c0c0c0">0</b>
<b style="left:168px;top:599px;color:#ff0000">37.4G</b>
<b style="left:217px;top:599px;color:#008080">3</b>
<b style="left:224px;top:599px;color:#c0c0c0">740</b>
<b style="left:252px;top:599px;color:#008000">R</b>
<b style="left:266px;top:599px;color:#c0c0c0">98.5</b>
<b style="left:301px;top:599px;color:#c0c0c0">39.7</b>
<b style="left:336px;top:599px;color:#c0c0c0">10:11.85</b>
<b style="left:483px;top:599px;color:#008000">generator</b>
<b style="left:553px;top:599px;color:#008000">0</b>
<b style="left:7px;top:611px;color:#c0c0c0">3647</b>
<b style="left:42px;top:611px;color:#808080">root</b>
<b style="left:119px;top:611px;color:#c0c0c0">20</b>
<b style="left:154px;top:611px;color:#c0c0c0">0</b>
<b style="left:168px;top:611px;color:#008080">21</b>
<b style="left:182px;top:611px;color:#c0c0c0">180</b>
<b style="left:210px;top:611px;color:#008080">18</b>
<b style="left:224px;top:611px;color:#c0c0c0">492</b>
<b style="left:252px;top:611px;color:#c0c0c0">S</b>
<b style="left:273px;top:611px;color:#c0c0c0">0.0</b>
<b style="left:308px;top:611px;color:#c0c0c0">0.0</b>
<b style="left:343px;top:611px;color:#c0c0c0">0:10.75</b>
<b style="left:420px;top:611px;color:#c0c0c0">/usr/sbin/</b>
<b style="left:490px;top:611px;color:#00ffff">smbd</b>
<b style="left:525px;top:611px;color:#c0c0c0">--foreground</b>
<b style="left:616px;top:611px;color:#c0c0c0">--no-process-group</b>
<b style="left:0px;top:623px;color:#c0c0c0">31263</b>
<b style="left:42px;top:623px;color:#c0c0c0">nabijaczl</b>
<b style="left:119px;top:623px;color:#c0c0c0">20</b>
<b style="left:154px;top:623px;color:#c0c0c0">0</b>
<b style="left:168px;top:623px;color:#008080">28</b>
<b style="left:182px;top:623px;color:#c0c0c0">832</b>
<b style="left:210px;top:623px;color:#008080">22</b>
<b style="left:224px;top:623px;color:#c0c0c0">220</b>
<b style="left:252px;top:623px;color:#c0c0c0">S</b>
<b style="left:273px;top:623px;color:#c0c0c0">0.0</b>
<b style="left:308px;top:623px;color:#c0c0c0">0.0</b>
<b style="left:343px;top:623px;color:#c0c0c0">4:42.61</b>
<b style="left:441px;top:623px;color:#c0c0c0">/usr/sbin/</b>
<b style="left:511px;top:623px;color:#00ffff">smbd</b>
<b style="left:546px;top:623px;color:#c0c0c0">--foreground</b>
<b style="left:637px;top:623px;color:#c0c0c0">--no-process-group</b>
<b style="left:7px;top:635px;color:#c0c0c0">3651</b>
<b style="left:42px;top:635px;color:#808080">root</b>
<b style="left:119px;top:635px;color:#c0c0c0">20</b>
<b style="left:154px;top:635px;color:#c0c0c0">0</b>
<b style="left:175px;top:635px;color:#008080">6</b>
<b style="left:182px;top:635px;color:#c0c0c0">044</b>
<b style="left:217px;top:635px;color:#008080">3</b>
<b style="left:224px;top:635px;color:#c0c0c0">504</b>
<b style="left:252px;top:635px;color:#c0c0c0">S</b>
<b style="left:273px;top:635px;color:#c0c0c0">0.0</b>
<b style="left:308px;top:635px;color:#c0c0c0">0.0</b>
<b style="left:343px;top:635px;color:#c0c0c0">0:00.12</b>
<b style="left:441px;top:635px;color:#c0c0c0">/usr/sbin/</b>
<b style="left:511px;top:635px;color:#00ffff">smbd</b>
<b style="left:546px;top:635px;color:#c0c0c0">--foreground</b>
<b style="left:637px;top:635px;color:#c0c0c0">--no-process-group</b>
<b style="left:7px;top:647px;color:#c0c0c0">3650</b>
<b style="left:42px;top:647px;color:#808080">root</b>
<b style="left:119px;top:647px;color:#c0c0c0">20</b>
<b style="left:154px;top:647px;color:#c0c0c0">0</b>
<b style="left:175px;top:647px;color:#008080">6</b>
<b style="left:182px;top:647px;color:#c0c0c0">640</b>
<b style="left:217px;top:647px;color:#008080">4</b>
<b style="left:224px;top:647px;color:#c0c0c0">100</b>
<b style="left:252px;top:647px;color:#c0c0c0">S</b>
<b style="left:273px;top:647px;color:#c0c0c0">0.0</b>
<b style="left:308px;top:647px;color:#c0c0c0">0.0</b>
<b style="left:343px;top:647px;color:#c0c0c0">0:23.19</b>
<b style="left:441px;top:647px;color:#c0c0c0">/usr/sbin/</b>
<b style="left:511px;top:647px;color:#00ffff">smbd</b>
<b style="left:546px;top:647px;color:#c0c0c0">--foreground</b>
<b style="left:637px;top:647px;color:#c0c0c0">--no-process-group</b>
<b style="left:7px;top:659px;color:#c0c0c0">1819</b>
<b style="left:42px;top:659px;color:#808080">root</b>
<b style="left:119px;top:659px;color:#c0c0c0">-2</b>
<b style="left:154px;top:659px;color:#c0c0c0">0</b>
<b style="left:175px;top:659px;color:#008080">1</b>
<b style="left:182px;top:659px;color:#c0c0c0">432</b>
<b style="left:217px;top:659px;color:#008080">1</b>
<b style="left:224px;top:659px;color:#c0c0c0">236</b>
<b style="left:252px;top:659px;color:#c0c0c0">S</b>
<b style="left:273px;top:659px;color:#c0c0c0">0.0</b>
<b style="left:308px;top:659px;color:#c0c0c0">0.0</b>
<b style="left:343px;top:659px;color:#c0c0c0">0:13.77</b>
<b style="left:420px;top:659px;color:#c0c0c0">/usr/sbin/</b>
<b style="left:490px;top:659px;color:#00ffff">watchdog</b>
<b style="left:7px;top:671px;color:#c0c0c0">1812</b>
<b style="left:42px;top:671px;color:#808080">proftpd</b>
<b style="left:119px;top:671px;color:#c0c0c0">20</b>
<b style="left:154px;top:671px;color:#c0c0c0">0</b>
<b style="left:175px;top:671px;color:#008080">5</b>
<b style="left:182px;top:671px;color:#c0c0c0">528</b>
<b style="left:217px;top:671px;color:#008080">3</b>
<b style="left:224px;top:671px;color:#c0c0c0">480</b>
<b style="left:252px;top:671px;color:#c0c0c0">S</b>
<b style="left:273px;top:671px;color:#c0c0c0">0.0</b>
<b style="left:308px;top:671px;color:#c0c0c0">0.0</b>
<b style="left:343px;top:671px;color:#c0c0c0">0:04.58</b>
<b style="left:420px;top:671px;color:#00ffff">proftpd:</b>
<b style="left:483px;top:671px;color:#c0c0c0">(accepting</b>
<b style="left:560px;top:671px;color:#c0c0c0">connections)</b>
<b style="left:7px;top:683px;color:#c0c0c0">1808</b>
<b style="left:42px;top:683px;color:#808080">root</b>
<b style="left:119px;top:683px;color:#c0c0c0">20</b>
<b style="left:154px;top:683px;color:#c0c0c0">0</b>
<b style="left:175px;top:683px;color:#008080">4</b>
<b style="left:182px;top:683px;color:#c0c0c0">620</b>
<b style="left:217px;top:683px;color:#008080">2</b>
<b style="left:224px;top:683px;color:#c0c0c0">756</b>
<b style="left:252px;top:683px;color:#c0c0c0">S</b>
<b style="left:273px;top:683px;color:#c0c0c0">0.0</b>
<b style="left:308px;top:683px;color:#c0c0c0">0.0</b>
<b style="left:343px;top:683px;color:#c0c0c0">1:05.04</b>
<b style="left:420px;top:683px;color:#c0c0c0">/usr/bin/</b>
<b style="left:483px;top:683px;color:#00ffff">monit</b>
<b style="left:525px;top:683px;color:#c0c0c0">-c</b>
<b style="left:546px;top:683px;color:#c0c0c0">/etc/monit/monitrc</b>
<b style="left:7px;top:695px;color:#c0c0c0">9312</b>
<b style="left:42px;top:695px;color:#808080">root</b>
<b style="left:119px;top:695px;color:#c0c0c0">20</b>
<b style="left:154px;top:695px;color:#c0c0c0">0</b>
<b style="left:175px;top:695px;color:#008080">4</b>
<b style="left:182px;top:695px;color:#c0c0c0">620</b>
<b style="left:217px;top:695px;color:#008080">2</b>
<b style="left:224px;top:695px;color:#c0c0c0">756</b>
<b style="left:252px;top:695px;color:#c0c0c0">S</b>
<b style="left:273px;top:695px;color:#c0c0c0">0.0</b>
<b style="left:308px;top:695px;color:#c0c0c0">0.0</b>
<b style="left:343px;top:695px;color:#c0c0c0">0:01.05</b>
<b style="left:441px;top:695px;color:#008000">monit</b>
<b style="left:7px;top:707px;color:#c0c0c0">1806</b>
<b style="left:42px;top:707px;color:#808080">root</b>
<b style="left:119px;top:707px;color:#c0c0c0">20</b>
<b style="left:154px;top:707px;color:#c0c0c0">0</b>
<b style="left:175px;top:707px;color:#008080">6</b>
<b style="left:182px;top:707px;color:#c0c0c0">980</b>
<b style="left:217px;top:707px;color:#008080">6</b>
<b style="left:224px;top:707px;color:#c0c0c0">116</b>
<b style="left:252px;top:707px;color:#c0c0c0">S</b>
<b style="left:273px;top:707px;color:#c0c0c0">0.0</b>
<b style="left:308px;top:707px;color:#c0c0c0">0.0</b>
<b style="left:343px;top:707px;color:#c0c0c0">0:00.01</b>
<b style="left:420px;top:707px;color:#c0c0c0">/usr/sbin/</b>
<b style="left:490px;top:707px;color:#00ffff">sshd</b>
<b style="left:525px;top:707px;color:#c0c0c0">-D</b>
<b style="left:0px;top:719px;color:#c0c0c0">14540</b>
<b style="left:42px;top:719px;color:#808080">root</b>
<b style="left:119px;top:719px;color:#c0c0c0">20</b>
<b style="left:154px;top:719px;color:#c0c0c0">0</b>
<b style="left:175px;top:719px;color:#008080">8</b>
<b style="left:182px;top:719px;color:#c0c0c0">128</b>
<b style="left:217px;top:719px;color:#008080">6</b>
<b style="left:224px;top:719px;color:#c0c0c0">984</b>
<b style="left:252px;top:719px;color:#c0c0c0">S</b>
<b style="left:273px;top:719px;color:#c0c0c0">0.0</b>
<b style="left:308px;top:719px;color:#c0c0c0">0.0</b>
<b style="left:343px;top:719px;color:#c0c0c0">0:00.02</b>
<b style="left:441px;top:719px;color:#00ffff">sshd:</b>
<b style="left:483px;top:719px;color:#c0c0c0">nabijaczleweli</b>
<b style="left:588px;top:719px;color:#c0c0c0">[priv]</b>
<b style="left:0px;top:731px;color:#c0c0c0">14546</b>
<b style="left:42px;top:731px;color:#c0c0c0">nabijaczl</b>
<b style="left:119px;top:731px;color:#c0c0c0">20</b>
<b style="left:154px;top:731px;color:#c0c0c0">0</b>
<b style="left:175px;top:731px;color:#008080">5</b>
<b style="left:182px;top:731px;color:#c0c0c0">580</b>
<b style="left:217px;top:731px;color:#008080">4</b>
<b style="left:224px;top:731px;color:#c0c0c0">416</b>
<b style="left:252px;top:731px;color:#c0c0c0">S</b>
<b style="left:273px;top:731px;color:#c0c0c0">0.0</b>
<b style="left:308px;top:731px;color:#c0c0c0">0.0</b>
<b style="left:343px;top:731px;color:#c0c0c0">0:05.82</b>
<b style="left:462px;top:731px;color:#00ffff">sshd:</b>
<b style="left:504px;top:731px;color:#c0c0c0">nabijaczleweli@pts/2</b>
<b style="left:0px;top:743px;color:#c0c0c0">14547</b>
<b style="left:42px;top:743px;color:#c0c0c0">nabijaczl</b>
<b style="left:119px;top:743px;color:#c0c0c0">20</b>
<b style="left:154px;top:743px;color:#c0c0c0">0</b>
<b style="left:175px;top:743px;color:#008080">4</b>
<b style="left:182px;top:743px;color:#c0c0c0">868</b>
<b style="left:217px;top:743px;color:#008080">3</b>
<b style="left:224px;top:743px;color:#c0c0c0">288</b>
<b style="left:252px;top:743px;color:#c0c0c0">S</b>
<b style="left:273px;top:743px;color:#c0c0c0">0.0</b>
<b style="left:308px;top:743px;color:#c0c0c0">0.0</b>
<b style="left:343px;top:743px;color:#c0c0c0">0:00.05</b>
<b style="left:483px;top:743px;color:#00ffff">-bash</b>
<b style="left:0px;top:755px;color:#c0c0c0">19936</b>
<b style="left:42px;top:755px;color:#c0c0c0">nabijaczl</b>
<b style="left:119px;top:755px;color:#c0c0c0">20</b>
<b style="left:154px;top:755px;color:#c0c0c0">0</b>
<b style="left:175px;top:755px;color:#008080">5</b>
<b style="left:182px;top:755px;color:#c0c0c0">140</b>
<b style="left:217px;top:755px;color:#008080">3</b>
<b style="left:224px;top:755px;color:#c0c0c0">292</b>
<b style="left:252px;top:755px;color:#008000">R</b>
<b style="left:273px;top:755px;color:#c0c0c0">1.3</b>
<b style="left:308px;top:755px;color:#c0c0c0">0.0</b>
<b style="left:343px;top:755px;color:#c0c0c0">0:36.26</b>
<b style="left:504px;top:755px;color:#00ffff">htop</b>
<b style="left:7px;top:767px;color:#c0c0c0">5305</b>
<b style="left:42px;top:767px;color:#808080">root</b>
<b style="left:119px;top:767px;color:#c0c0c0">20</b>
<b style="left:154px;top:767px;color:#c0c0c0">0</b>
<b style="left:175px;top:767px;color:#008080">8</b>
<b style="left:182px;top:767px;color:#c0c0c0">268</b>
<b style="left:217px;top:767px;color:#008080">7</b>
<b style="left:224px;top:767px;color:#c0c0c0">124</b>
<b style="left:252px;top:767px;color:#c0c0c0">S</b>
<b style="left:273px;top:767px;color:#c0c0c0">0.0</b>
<b style="left:308px;top:767px;color:#c0c0c0">0.0</b>
<b style="left:343px;top:767px;color:#c0c0c0">0:00.01</b>
<b style="left:441px;top:767px;color:#00ffff">sshd:</b>
<b style="left:483px;top:767px;color:#c0c0c0">nabijaczleweli</b>
<b style="left:588px;top:767px;color:#c0c0c0">[priv]</b>
<b style="left:7px;top:779px;color:#c0c0c0">5311</b>
<b style="left:42px;top:779px;color:#c0c0c0">nabijaczl</b>
<b style="left:119px;top:779px;color:#c0c0c0">20</b>
<b style="left:154px;top:779px;color:#c0c0c0">0</b>
<b style="left:175px;top:779px;color:#008080">5</b>
<b style="left:182px;top:779px;color:#c0c0c0">200</b>
<b style="left:217px;top:779px;color:#008080">4</b>
<b style="left:224px;top:779px;color:#c0c0c0">052</b>
<b style="left:252px;top:779px;color:#c0c0c0">S</b>
<b style="left:273px;top:779px;color:#c0c0c0">0.0</b>
<b style="left:308px;top:779px;color:#c0c0c0">0.0</b>
<b style="left:343px;top:779px;color:#c0c0c0">0:00.37</b>
<b style="left:462px;top:779px;color:#00ffff">sshd:</b>
<b style="left:504px;top:779px;color:#c0c0c0">nabijaczleweli@pts/0</b>
<b style="left:7px;top:791px;color:#c0c0c0">5312</b>
<b style="left:42px;top:791px;color:#c0c0c0">nabijaczl</b>
<b style="left:119px;top:791px;color:#c0c0c0">20</b>
<b style="left:154px;top:791px;color:#c0c0c0">0</b>
<b style="left:175px;top:791px;color:#008080">6</b>
<b style="left:182px;top:791px;color:#c0c0c0">300</b>
<b style="left:217px;top:791px;color:#008080">3</b>
<b style="left:224px;top:791px;color:#c0c0c0">648</b>
<b style="left:252px;top:791px;color:#c0c0c0">S</b>
<b style="left:273px;top:791px;color:#c0c0c0">0.0</b>
<b style="left:308px;top:791px;color:#c0c0c0">0.0</b>
<b style="left:343px;top:791px;color:#c0c0c0">0:00.18</b>
<b style="left:483px;top:791px;color:#00ffff">-bash</b>
<b style="left:7px;top:803px;color:#c0c0c0">1703</b>
<b style="left:42px;top:803px;color:#808080">root</b>
<b style="left:119px;top:803px;color:#c0c0c0">20</b>
<b style="left:154px;top:803px;color:#c0c0c0">0</b>
<b style="left:175px;top:803px;color:#008080">3</b>
<b style="left:182px;top:803px;color:#c0c0c0">924</b>
<b style="left:217px;top:803px;color:#008080">3</b>
<b style="left:224px;top:803px;color:#c0c0c0">096</b>
<b style="left:252px;top:803px;color:#c0c0c0">S</b>
<b style="left:273px;top:803px;color:#c0c0c0">0.0</b>
<b style="left:308px;top:803px;color:#c0c0c0">0.0</b>
<b style="left:343px;top:803px;color:#c0c0c0">0:02.89</b>
<b style="left:420px;top:803px;color:#c0c0c0">/usr/lib/postfix/sbin/</b>
<b style="left:574px;top:803px;color:#00ffff">master</b>
<b style="left:623px;top:803px;color:#c0c0c0">-w</b>
<b style="left:0px;top:815px;color:#c0c0c0">22009</b>
<b style="left:42px;top:815px;color:#808080">postfix</b>
<b style="left:119px;top:815px;color:#c0c0c0">20</b>
<b style="left:154px;top:815px;color:#c0c0c0">0</b>
<b style="left:175px;top:815px;color:#008080">7</b>
<b style="left:182px;top:815px;color:#c0c0c0">116</b>
<b style="left:217px;top:815px;color:#008080">6</b>
<b style="left:224px;top:815px;color:#c0c0c0">280</b>
<b style="left:252px;top:815px;color:#c0c0c0">S</b>
<b style="left:273px;top:815px;color:#c0c0c0">0.0</b>
<b style="left:308px;top:815px;color:#c0c0c0">0.0</b>
<b style="left:343px;top:815px;color:#c0c0c0">0:00.01</b>
<b style="left:441px;top:815px;color:#00ffff">pickup</b>
<b style="left:490px;top:815px;color:#c0c0c0">-l</b>
<b style="left:511px;top:815px;color:#c0c0c0">-t</b>
<b style="left:532px;top:815px;color:#c0c0c0">unix</b>
<b style="left:567px;top:815px;color:#c0c0c0">-u</b>
<b style="left:588px;top:815px;color:#c0c0c0">-c</b>
<b style="left:0px;top:827px;color:#c0c0c0">21063</b>
<b style="left:42px;top:827px;color:#808080">postfix</b>
<b style="left:119px;top:827px;color:#c0c0c0">20</b>
<b style="left:154px;top:827px;color:#c0c0c0">0</b>
<b style="left:175px;top:827px;color:#008080">7</b>
<b style="left:182px;top:827px;color:#c0c0c0">028</b>
<b style="left:217px;top:827px;color:#008080">6</b>
<b style="left:224px;top:827px;color:#c0c0c0">196</b>
<b style="left:252px;top:827px;color:#c0c0c0">S</b>
<b style="left:273px;top:827px;color:#c0c0c0">0.0</b>
<b style="left:308px;top:827px;color:#c0c0c0">0.0</b>
<b style="left:343px;top:827px;color:#c0c0c0">0:00.00</b>
<b style="left:441px;top:827px;color:#00ffff">proxymap</b>
<b style="left:504px;top:827px;color:#c0c0c0">-t</b>
<b style="left:525px;top:827px;color:#c0c0c0">unix</b>
<b style="left:560px;top:827px;color:#c0c0c0">-u</b>
<b style="left:7px;top:839px;color:#c0c0c0">1705</b>
<b style="left:42px;top:839px;color:#808080">postfix</b>
<b style="left:119px;top:839px;color:#c0c0c0">20</b>
<b style="left:154px;top:839px;color:#c0c0c0">0</b>
<b style="left:175px;top:839px;color:#008080">7</b>
<b style="left:182px;top:839px;color:#c0c0c0">444</b>
<b style="left:217px;top:839px;color:#008080">6</b>
<b style="left:224px;top:839px;color:#c0c0c0">500</b>
<b style="left:252px;top:839px;color:#c0c0c0">S</b>
<b style="left:273px;top:839px;color:#c0c0c0">0.0</b>
<b style="left:308px;top:839px;color:#c0c0c0">0.0</b>
<b style="left:343px;top:839px;color:#c0c0c0">0:00.40</b>
<b style="left:441px;top:839px;color:#00ffff">qmgr</b>
<b style="left:476px;top:839px;color:#c0c0c0">-l</b>
<b style="left:497px;top:839px;color:#c0c0c0">-t</b>
<b style="left:518px;top:839px;color:#c0c0c0">unix</b>
<b style="left:553px;top:839px;color:#c0c0c0">-u</b>
<b style="left:0px;top:851px;color:#c0c0c0">F1</b>
<b style="left:14px;top:851px;color:#000000">Help</b>
<b style="left:56px;top:851px;color:#c0c0c0">F2</b>
<b style="left:70px;top:851px;color:#000000">Setup</b>
<b style="left:112px;top:851px;color:#c0c0c0">F3</b>
<b style="left:126px;top:851px;color:#000000">Search</b>
<b style="left:168px;top:851px;color:#c0c0c0">F4</b>
<b style="left:182px;top:851px;color:#000000">Filter</b>
<b style="left:224px;top:851px;color:#c0c0c0">F5</b>
<b style="left:238px;top:851px;color:#000000">Sorted</b>
<b style="left:280px;top:851px;color:#c0c0c0">F6</b>
<b style="left:294px;top:851px;color:#000000">Collap</b>
<b style="left:336px;top:851px;color:#c0c0c0">F7</b>
<b style="left:350px;top:851px;color:#000000">Nice</b>
<b style="left:385px;top:851px;color:#000000">-</b>
<b style="left:392px;top:851px;color:#c0c0c0">F8</b>
<b style="left:406px;top:851px;color:#000000">Nice</b>
<b style="left:441px;top:851px;color:#000000">+</b>
<b style="left:448px;top:851px;color:#c0c0c0">F9</b>
<b style="left:462px;top:851px;color:#000000">Kill</b>
<b style="left:504px;top:851px;color:#c0c0c0">F10</b>
<b style="left:525px;top:851px;color:#000000">Quit</b>
</div>
<div id="sb">
 <div style="position:absolute;left:0;top:0;width:1px;height:847px;background:#cfcfcf"></div>
 <div style="position:absolute;left:16px;top:0;width:1px;height:847px;background:#a0a0a0"></div>
 <div style="position:absolute;left:1px;top:17px;width:15px;height:17px;background:#dadada;border-top:1px solid #a8a8a8;border-bottom:1px solid #a8a8a8;box-sizing:border-box"></div>
 <svg style="position:absolute;left:1px;top:0" width="15" height="17"><path d="M4 11.8 L7.5 8.3 L11 11.8" stroke="#606060" stroke-width="1.5" fill="none"/></svg>
 <div style="position:absolute;left:1px;top:830px;width:15px;height:1px;background:#c8c8c8"></div>
 <svg style="position:absolute;left:1px;top:831px" width="15" height="17"><path d="M4 6 L7.5 9.5 L11 6" stroke="#606060" stroke-width="1.5" fill="none"/></svg>
</div>
</body></html>
